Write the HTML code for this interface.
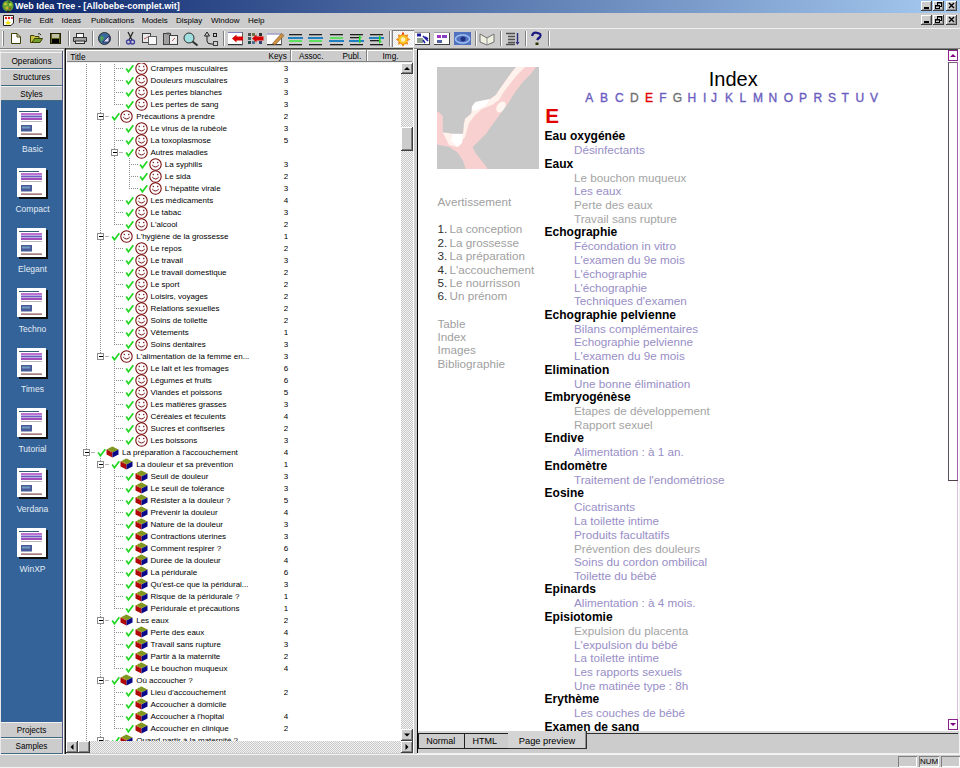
<!DOCTYPE html>
<html><head><meta charset="utf-8"><style>
html,body{margin:0;padding:0;width:960px;height:768px;overflow:hidden;background:#cccccc}
body{position:relative;font-family:"Liberation Sans",sans-serif}
.t{position:absolute;white-space:nowrap;font-family:"Liberation Sans",sans-serif}
svg{overflow:visible}
</style></head><body>
<div style="position:absolute;left:0px;top:0px;width:960px;height:13px;background:linear-gradient(to right,#0a246a 0%,#a6caf0 100%)"></div>
<div class="t" style="left:15.00px;top:2.38px;font-size:9px;line-height:9px;color:#fff;font-weight:bold;">Web Idea Tree - [Allobebe-complet.wit]</div>
<svg style="position:absolute;left:1px;top:0px" width="14" height="13"><circle cx="7" cy="5.8" r="5.6" fill="#60a030"/><circle cx="4.5" cy="4" r="1.6" fill="#c0c040"/><circle cx="9.5" cy="4.5" r="1.5" fill="#b0d040"/><circle cx="6" cy="8" r="1.4" fill="#d0b030"/><circle cx="8" cy="2" r="1" fill="#306020"/><circle cx="9" cy="8.5" r="1" fill="#a04020"/><rect x="6" y="10.5" width="2.5" height="2" fill="#302010"/></svg>
<div style="position:absolute;left:921px;top:1px;width:11px;height:10px;background:#cccccc;box-shadow:inset -1px -1px #404040, inset 1px 1px #fff, inset -2px -2px #909090"></div>
<div style="position:absolute;left:924px;top:7px;width:5px;height:2px;background:#000"></div>
<div style="position:absolute;left:933px;top:1px;width:11px;height:10px;background:#cccccc;box-shadow:inset -1px -1px #404040, inset 1px 1px #fff, inset -2px -2px #909090"></div>
<svg style="position:absolute;left:933px;top:1px" width="11" height="10"><rect x="4.5" y="1.5" width="4" height="4" fill="none" stroke="#000"/><rect x="4" y="1" width="5" height="1.5" fill="#000"/><rect x="2.5" y="4.5" width="4" height="3" fill="#ccc" stroke="#000"/><rect x="2" y="4" width="5" height="1.5" fill="#000"/></svg>
<div style="position:absolute;left:946px;top:1px;width:11px;height:10px;background:#cccccc;box-shadow:inset -1px -1px #404040, inset 1px 1px #fff, inset -2px -2px #909090"></div>
<svg style="position:absolute;left:946px;top:1px" width="11" height="10"><path d="M3 2 L8 7 M8 2 L3 7" stroke="#000" stroke-width="1.4"/></svg>
<div style="position:absolute;left:0px;top:13px;width:960px;height:15px;background:#cccccc"></div>
<div style="position:absolute;left:0px;top:28px;width:960px;height:1px;background:#f0f0f0"></div>
<div style="position:absolute;left:921px;top:15px;width:11px;height:10px;background:#cccccc;box-shadow:inset -1px -1px #404040, inset 1px 1px #fff, inset -2px -2px #909090"></div>
<div style="position:absolute;left:924px;top:21px;width:5px;height:2px;background:#000"></div>
<div style="position:absolute;left:933px;top:15px;width:11px;height:10px;background:#cccccc;box-shadow:inset -1px -1px #404040, inset 1px 1px #fff, inset -2px -2px #909090"></div>
<svg style="position:absolute;left:933px;top:15px" width="11" height="10"><rect x="4.5" y="1.5" width="4" height="4" fill="none" stroke="#000"/><rect x="4" y="1" width="5" height="1.5" fill="#000"/><rect x="2.5" y="4.5" width="4" height="3" fill="#ccc" stroke="#000"/><rect x="2" y="4" width="5" height="1.5" fill="#000"/></svg>
<div style="position:absolute;left:946px;top:15px;width:11px;height:10px;background:#cccccc;box-shadow:inset -1px -1px #404040, inset 1px 1px #fff, inset -2px -2px #909090"></div>
<svg style="position:absolute;left:946px;top:15px" width="11" height="10"><path d="M3 2 L8 7 M8 2 L3 7" stroke="#000" stroke-width="1.4"/></svg>
<svg style="position:absolute;left:3px;top:15px" width="12" height="12"><path d="M0.5 0.5 H10.5 V8 L8 10.5 H0.5 Z" fill="#fff" stroke="#202020"/><circle cx="3" cy="3" r="1.2" fill="#e02020"/><circle cx="6" cy="3" r="1.2" fill="#e02020"/><circle cx="9" cy="3" r="1.1" fill="#c02040"/><path d="M5 5 L6 7 L8 7.3 L6.5 8.5 L7 10 L5 9 L3 10 L3.5 8.5 L2 7.3 L4 7 Z" fill="#f0e000"/></svg>
<div class="t" style="left:18.50px;top:17.03px;font-size:8px;line-height:8px;color:#000;font-weight:normal;">File</div>
<div class="t" style="left:39.50px;top:17.03px;font-size:8px;line-height:8px;color:#000;font-weight:normal;">Edit</div>
<div class="t" style="left:61.50px;top:17.03px;font-size:8px;line-height:8px;color:#000;font-weight:normal;">Ideas</div>
<div class="t" style="left:91.00px;top:17.03px;font-size:8px;line-height:8px;color:#000;font-weight:normal;">Publications</div>
<div class="t" style="left:142.00px;top:17.03px;font-size:8px;line-height:8px;color:#000;font-weight:normal;">Models</div>
<div class="t" style="left:176.00px;top:17.03px;font-size:8px;line-height:8px;color:#000;font-weight:normal;">Display</div>
<div class="t" style="left:211.00px;top:17.03px;font-size:8px;line-height:8px;color:#000;font-weight:normal;">Window</div>
<div class="t" style="left:248.00px;top:17.03px;font-size:8px;line-height:8px;color:#000;font-weight:normal;">Help</div>
<div style="position:absolute;left:0px;top:29px;width:960px;height:19px;background:#cccccc"></div>
<div style="position:absolute;left:0px;top:48px;width:960px;height:1px;background:#808080"></div>
<div style="position:absolute;left:2px;top:31px;width:1px;height:15px;background:#fff"></div>
<div style="position:absolute;left:3px;top:31px;width:1px;height:15px;background:#808080"></div>
<div style="position:absolute;left:68px;top:31px;width:1px;height:15px;background:#808080"></div>
<div style="position:absolute;left:69px;top:31px;width:1px;height:15px;background:#fff"></div>
<div style="position:absolute;left:92px;top:31px;width:1px;height:15px;background:#808080"></div>
<div style="position:absolute;left:93px;top:31px;width:1px;height:15px;background:#fff"></div>
<div style="position:absolute;left:118px;top:31px;width:1px;height:15px;background:#808080"></div>
<div style="position:absolute;left:119px;top:31px;width:1px;height:15px;background:#fff"></div>
<div style="position:absolute;left:223px;top:31px;width:1px;height:15px;background:#808080"></div>
<div style="position:absolute;left:224px;top:31px;width:1px;height:15px;background:#fff"></div>
<div style="position:absolute;left:389px;top:31px;width:1px;height:15px;background:#808080"></div>
<div style="position:absolute;left:390px;top:31px;width:1px;height:15px;background:#fff"></div>
<div style="position:absolute;left:475px;top:31px;width:1px;height:15px;background:#808080"></div>
<div style="position:absolute;left:476px;top:31px;width:1px;height:15px;background:#fff"></div>
<div style="position:absolute;left:500px;top:31px;width:1px;height:15px;background:#808080"></div>
<div style="position:absolute;left:501px;top:31px;width:1px;height:15px;background:#fff"></div>
<div style="position:absolute;left:525px;top:31px;width:1px;height:15px;background:#808080"></div>
<div style="position:absolute;left:526px;top:31px;width:1px;height:15px;background:#fff"></div>
<div style="position:absolute;left:548px;top:31px;width:1px;height:15px;background:#808080"></div>
<div style="position:absolute;left:549px;top:31px;width:1px;height:15px;background:#fff"></div>
<svg style="position:absolute;left:11px;top:33px" width="10" height="11" viewBox="0 0 10 11"><path d="M0.5 0.5 H6 L9.5 4 V10.5 H0.5 Z" fill="#fff" stroke="#404000"/><path d="M6 0.5 V4 H9.5" fill="none" stroke="#404000"/></svg>
<svg style="position:absolute;left:30px;top:33px" width="13" height="11" viewBox="0 0 13 11"><path d="M0.5 2.5 H4 L5 3.5 H9 V9.5 H0.5 Z" fill="#c8c040" stroke="#404000"/><path d="M2 9.5 L4.5 5.5 H12.5 L10 9.5 Z" fill="#70a030" stroke="#404000"/><path d="M8 1 Q10 0 11 2" fill="none" stroke="#202020"/></svg>
<svg style="position:absolute;left:50px;top:33px" width="11" height="11" viewBox="0 0 11 11"><rect x="0.5" y="0.5" width="10" height="10" fill="#606020" stroke="#202000"/><rect x="2" y="1" width="7" height="4" fill="#c0c0a0"/><rect x="2" y="6" width="7" height="4" fill="#000"/></svg>
<svg style="position:absolute;left:73px;top:33px" width="14" height="11" viewBox="0 0 14 11"><rect x="3.5" y="0.5" width="7" height="4" fill="#fff" stroke="#303030"/><path d="M0.5 4.5 H13.5 V8.5 H0.5 Z" fill="#a0a0a0" stroke="#303030"/><rect x="2.5" y="8" width="9" height="2.5" fill="#e0e0e0" stroke="#303030"/></svg>
<svg style="position:absolute;left:98px;top:32px" width="13" height="13" viewBox="0 0 13 13"><circle cx="6.5" cy="6.5" r="6" fill="#3a6a9a" stroke="#303030"/><path d="M2 5 Q5 3 6 6 Q4 9 3 10" fill="#50a050"/><path d="M5 10 L11 4 L11 10 Z" fill="#e0e0f0" stroke="#202060" stroke-width="0.8"/></svg>
<svg style="position:absolute;left:126px;top:32px" width="9" height="13" viewBox="0 0 9 13"><path d="M2 0 L6 8 M7 0 L3 8" stroke="#202020" stroke-width="1.2"/><circle cx="2.5" cy="10" r="2" fill="none" stroke="#4040a0" stroke-width="1.4"/><circle cx="6.5" cy="10" r="2" fill="none" stroke="#4040a0" stroke-width="1.4"/></svg>
<svg style="position:absolute;left:142px;top:33px" width="16" height="12" viewBox="0 0 16 12"><rect x="0.5" y="0.5" width="8" height="9" fill="#e8e8e8" stroke="#404040"/><rect x="6.5" y="3.5" width="8" height="8" fill="#f8f8f8" stroke="#606060"/><path d="M2 6 L6 4" stroke="#c06060"/></svg>
<svg style="position:absolute;left:163px;top:32px" width="16" height="13" viewBox="0 0 16 13"><rect x="0.5" y="1.5" width="7" height="11" fill="#a0a0a0" stroke="#404040"/><rect x="3.5" y="0.5" width="3" height="2" fill="#606060"/><rect x="6.5" y="3.5" width="8" height="9" fill="#f0f0f0" stroke="#404040"/><path d="M9 9 L12 6" stroke="#c06060"/></svg>
<svg style="position:absolute;left:183px;top:32px" width="16" height="14" viewBox="0 0 16 14"><circle cx="6" cy="6" r="5" fill="#a0e0e0" stroke="#303030"/><path d="M9.5 9.5 L14.5 13.5" stroke="#303030" stroke-width="2"/></svg>
<svg style="position:absolute;left:204px;top:32px" width="14" height="14" viewBox="0 0 14 14"><path d="M3 0 L0.5 4 H5.5 Z M3 4 V9 Q3 12 7 12 H10" fill="none" stroke="#202020"/><rect x="9.5" y="1.5" width="3" height="3" fill="none" stroke="#202020"/><rect x="9.5" y="9.5" width="4" height="4" fill="#d0d0d0" stroke="#404040"/></svg>
<svg style="position:absolute;left:228px;top:32px" width="15" height="13" viewBox="0 0 15 13"><rect x="0" y="0" width="15" height="13" fill="#fff"/><rect x="0" y="0" width="15" height="1" fill="#8080c0"/><rect x="0" y="12" width="15" height="1.2" fill="#303030"/><rect x="14" y="0" width="1" height="13" fill="#606060"/><path d="M4 6.5 L8.5 2.5 V4.5 H15 V8.5 H8.5 V10.5 Z" fill="#d80000"/></svg>
<svg style="position:absolute;left:248px;top:32px" width="16" height="13" viewBox="0 0 16 13"><rect x="0" y="1" width="3" height="3" fill="#505050"/><rect x="4" y="1" width="3" height="3" fill="#707040"/><rect x="0" y="9" width="3" height="3" fill="#204848"/><rect x="4" y="9" width="3" height="3" fill="#507090"/><rect x="11" y="1" width="3" height="3" fill="#303030"/><rect x="11" y="9" width="3" height="3" fill="#304070"/><rect x="0" y="5" width="3" height="3" fill="#406060"/><path d="M4 6.5 L8.5 2.5 V4.5 H15.5 V8.5 H8.5 V10.5 Z" fill="#d80000"/></svg>
<svg style="position:absolute;left:267px;top:32px" width="17" height="13" viewBox="0 0 17 13"><rect x="0" y="1.5" width="15" height="11" fill="#fff"/><rect x="0" y="1.5" width="15" height="1" fill="#7070b0"/><rect x="0" y="12" width="15" height="1.2" fill="#303030"/><rect x="14" y="2" width="1" height="11" fill="#606060"/><path d="M5.5 11.5 L14.5 1.5 L17 3.5 L8 13 Z" fill="#d09040" stroke="#705020" stroke-width="0.6"/></svg>
<svg style="position:absolute;left:288px;top:33px" width="15" height="13" viewBox="0 0 15 13"><rect x="1" y="1" width="13" height="1.3" fill="#202020"/><rect x="1" y="11" width="13" height="1.3" fill="#202020"/><rect x="0" y="4" width="15" height="2" fill="#2080c0"/><rect x="1" y="7" width="13" height="2" fill="#60e060"/></svg>
<svg style="position:absolute;left:308px;top:33px" width="15" height="13" viewBox="0 0 15 13"><rect x="1" y="1" width="13" height="1.3" fill="#202020"/><rect x="1" y="11" width="13" height="1.3" fill="#202020"/><rect x="0" y="4" width="15" height="2" fill="#2080c0"/><rect x="1" y="7" width="13" height="2" fill="#60e060"/></svg>
<svg style="position:absolute;left:329px;top:33px" width="15" height="13" viewBox="0 0 15 13"><rect x="1" y="1" width="13" height="1.3" fill="#202020"/><rect x="1" y="11" width="13" height="1.3" fill="#202020"/><rect x="1" y="4" width="13" height="2" fill="#60e060"/><rect x="0" y="7" width="15" height="2" fill="#2080c0"/></svg>
<svg style="position:absolute;left:349px;top:33px" width="15" height="13" viewBox="0 0 15 13"><rect x="1" y="1" width="13" height="1.3" fill="#202020"/><rect x="1" y="11" width="13" height="1.3" fill="#202020"/><rect x="1" y="4" width="10" height="1.3" fill="#202020"/><rect x="0" y="7" width="15" height="2" fill="#2080c0"/><path d="M10 2 L13 5 H11.5 V10 H10 Z" fill="#20e020"/></svg>
<svg style="position:absolute;left:369px;top:33px" width="15" height="13" viewBox="0 0 15 13"><rect x="1" y="1" width="13" height="1.3" fill="#202020"/><rect x="1" y="11" width="13" height="1.3" fill="#202020"/><rect x="0" y="4" width="15" height="2" fill="#2080c0"/><rect x="1" y="7" width="10" height="1.3" fill="#202020"/><path d="M10 11 L13 8 H11.5 V3 H10 Z" fill="#20e020"/></svg>
<div style="position:absolute;left:392px;top:30px;width:22px;height:17px;background:repeating-conic-gradient(#e8e8e8 0 25%,#ffffff 0 50%) 0 0/2px 2px;box-shadow:inset 1px 1px #808080, inset -1px -1px #fff"></div>
<svg style="position:absolute;left:395px;top:32px" width="16" height="15" viewBox="0 0 16 15"><g transform="translate(8 7.5)"><path d="M0.00 -7.20 L1.84 -4.43 L5.09 -5.09 L4.43 -1.84 L7.20 0.00 L4.43 1.84 L5.09 5.09 L1.84 4.43 L0.00 7.20 L-1.84 4.43 L-5.09 5.09 L-4.43 1.84 L-7.20 0.00 L-4.43 -1.84 L-5.09 -5.09 L-1.84 -4.43 Z" fill="#f08a18"/><circle r="4.3" fill="#f8c828"/><circle r="2.2" fill="#fff0c0"/><path d="M-1 -7 L1 -7 L0 -4 Z" fill="#e03010"/></g></svg>
<svg style="position:absolute;left:415px;top:32px" width="15" height="13" viewBox="0 0 15 13"><rect x="0" y="0" width="15" height="13" fill="#fff"/><rect x="0" y="12" width="15" height="1" fill="#404040"/><rect x="14" y="0" width="1" height="13" fill="#404040"/><rect x="0" y="0" width="15" height="1" fill="#a0a0a0"/><rect x="2" y="1.5" width="4" height="3" fill="#2020a0"/><rect x="2" y="6" width="6" height="5" fill="#90a090"/><path d="M8 4 L13 9 M8 8 L10 11 M10 5 L13 7" stroke="#2020a0" stroke-width="1.6"/></svg>
<svg style="position:absolute;left:434px;top:32px" width="16" height="13" viewBox="0 0 16 13"><rect x="0" y="0" width="16" height="13" fill="#fff"/><rect x="0" y="12" width="16" height="1" fill="#404040"/><rect x="15" y="0" width="1" height="13" fill="#404040"/><rect x="0" y="0" width="16" height="1" fill="#a0a0a0"/><rect x="3" y="3" width="4" height="3" fill="#a030c0"/><rect x="8" y="3" width="5" height="3" fill="#8040c0"/><rect x="3" y="8" width="5" height="3" fill="#5060a0"/></svg>
<svg style="position:absolute;left:454px;top:32px" width="17" height="13" viewBox="0 0 17 13"><rect x="0" y="0" width="17" height="13" fill="#5070c0"/><ellipse cx="8.5" cy="7" rx="7" ry="4" fill="none" stroke="#a0c0f0" stroke-width="1.5"/><circle cx="9" cy="7" r="2.5" fill="#203080"/></svg>
<svg style="position:absolute;left:479px;top:33px" width="17" height="12" viewBox="0 0 17 12"><path d="M1 1 L8 5 L15 1 V9 L8 12 L1 9 Z" fill="#f0f0e0" stroke="#707070"/><path d="M8 5 V12" stroke="#909090"/></svg>
<svg style="position:absolute;left:505px;top:32px" width="16" height="14" viewBox="0 0 16 14"><path d="M1 1.5 H10 M3 4.5 H10 M3 7.5 H10 M3 10.5 H10 M1 12.5 H10" stroke="#505050" stroke-width="1.3"/><path d="M12.5 1 V11" stroke="#303080" stroke-width="1.5"/><path d="M10.5 10 L12.5 13 L14.5 10 Z" fill="#303080"/></svg>
<svg style="position:absolute;left:530px;top:32px" width="14" height="14" viewBox="0 0 14 14"><path d="M2 4 Q3 0 7 0.8 Q12 1.5 10 5 Q8 6.5 7 8" fill="none" stroke="#1a1a80" stroke-width="2.2"/><rect x="5.5" y="10.5" width="3" height="2.5" fill="#303000"/></svg>
<div style="position:absolute;left:0px;top:49px;width:960px;height:706px;background:#cccccc"></div>
<div style="position:absolute;left:0px;top:49px;width:960px;height:1px;background:#f4f4f4"></div>
<div style="position:absolute;left:0px;top:51px;width:64px;height:704px;background:#cccccc;box-shadow:inset 1px 0 #e8e8e8, inset -1px -1px #f8f8f8, inset -2px -2px #505a80"></div>
<div style="position:absolute;left:1px;top:52px;width:61px;height:17px;background:#cccccc;box-shadow:inset 0 1px #f0f0f0, inset 0 -1px #406a80"></div>
<div class="t" style="left:1px;width:61px;text-align:center;top:57.86px;font-size:8.2px;line-height:8.2px;color:#000">Operations</div>
<div style="position:absolute;left:1px;top:69px;width:61px;height:17px;background:#cccccc;box-shadow:inset 0 1px #f0f0f0, inset 0 -1px #406a80"></div>
<div class="t" style="left:1px;width:61px;text-align:center;top:74.06px;font-size:8.2px;line-height:8.2px;color:#000">Structures</div>
<div style="position:absolute;left:1px;top:86px;width:61px;height:15px;background:#cccccc;box-shadow:inset 0 1px #f0f0f0, inset 0 -1px #406a80"></div>
<div class="t" style="left:1px;width:61px;text-align:center;top:90.56px;font-size:8.2px;line-height:8.2px;color:#000">Styles</div>
<div style="position:absolute;left:1px;top:101px;width:61px;height:621px;background:#336399"></div>
<div style="position:absolute;left:19px;top:110px;width:29px;height:29px;background:#101010"></div>
<svg style="position:absolute;left:17px;top:108px" width="30" height="30" viewBox="0 0 30 30"><rect width="29" height="29" fill="#fff"/><rect x="2" y="3" width="20" height="1" fill="#306070"/><rect x="4" y="5" width="21" height="2" fill="#c070d0"/><rect x="4" y="7.5" width="21" height="2" fill="#7060c0"/><rect x="4" y="10" width="21" height="2" fill="#a050b8"/><rect x="4" y="13" width="21" height="1" fill="#b8b8b8"/><rect x="4" y="17" width="11" height="6.5" fill="#4a5a98"/><rect x="5" y="18.5" width="8" height="2" fill="#70a0c0"/><rect x="4" y="25.5" width="21" height="1.2" fill="#804848"/></svg>
<div class="t" style="left:1px;width:63px;text-align:center;top:145.20px;font-size:8.5px;line-height:8.5px;color:#e4ecf4">Basic</div>
<div style="position:absolute;left:19px;top:170px;width:29px;height:29px;background:#101010"></div>
<svg style="position:absolute;left:17px;top:168px" width="30" height="30" viewBox="0 0 30 30"><rect width="29" height="29" fill="#fff"/><rect x="2" y="3" width="20" height="1" fill="#306070"/><rect x="4" y="5" width="21" height="2" fill="#c070d0"/><rect x="4" y="7.5" width="21" height="2" fill="#7060c0"/><rect x="4" y="10" width="21" height="2" fill="#a050b8"/><rect x="4" y="13" width="21" height="1" fill="#b8b8b8"/><rect x="4" y="17" width="11" height="6.5" fill="#4a5a98"/><rect x="5" y="18.5" width="8" height="2" fill="#70a0c0"/><rect x="4" y="25.5" width="21" height="1.2" fill="#804848"/></svg>
<div class="t" style="left:1px;width:63px;text-align:center;top:205.20px;font-size:8.5px;line-height:8.5px;color:#e4ecf4">Compact</div>
<div style="position:absolute;left:19px;top:230px;width:29px;height:29px;background:#101010"></div>
<svg style="position:absolute;left:17px;top:228px" width="30" height="30" viewBox="0 0 30 30"><rect width="29" height="29" fill="#fff"/><rect x="2" y="3" width="20" height="1" fill="#306070"/><rect x="4" y="5" width="21" height="2" fill="#c070d0"/><rect x="4" y="7.5" width="21" height="2" fill="#7060c0"/><rect x="4" y="10" width="21" height="2" fill="#a050b8"/><rect x="4" y="13" width="21" height="1" fill="#b8b8b8"/><rect x="4" y="17" width="11" height="6.5" fill="#4a5a98"/><rect x="5" y="18.5" width="8" height="2" fill="#70a0c0"/><rect x="4" y="25.5" width="21" height="1.2" fill="#804848"/></svg>
<div class="t" style="left:1px;width:63px;text-align:center;top:265.20px;font-size:8.5px;line-height:8.5px;color:#e4ecf4">Elegant</div>
<div style="position:absolute;left:19px;top:290px;width:29px;height:29px;background:#101010"></div>
<svg style="position:absolute;left:17px;top:288px" width="30" height="30" viewBox="0 0 30 30"><rect width="29" height="29" fill="#fff"/><rect x="2" y="3" width="20" height="1" fill="#306070"/><rect x="4" y="5" width="21" height="2" fill="#c070d0"/><rect x="4" y="7.5" width="21" height="2" fill="#7060c0"/><rect x="4" y="10" width="21" height="2" fill="#a050b8"/><rect x="4" y="13" width="21" height="1" fill="#b8b8b8"/><rect x="4" y="17" width="11" height="6.5" fill="#4a5a98"/><rect x="5" y="18.5" width="8" height="2" fill="#70a0c0"/><rect x="4" y="25.5" width="21" height="1.2" fill="#804848"/></svg>
<div class="t" style="left:1px;width:63px;text-align:center;top:325.20px;font-size:8.5px;line-height:8.5px;color:#e4ecf4">Techno</div>
<div style="position:absolute;left:19px;top:350px;width:29px;height:29px;background:#101010"></div>
<svg style="position:absolute;left:17px;top:348px" width="30" height="30" viewBox="0 0 30 30"><rect width="29" height="29" fill="#fff"/><rect x="2" y="3" width="20" height="1" fill="#306070"/><rect x="4" y="5" width="21" height="2" fill="#c070d0"/><rect x="4" y="7.5" width="21" height="2" fill="#7060c0"/><rect x="4" y="10" width="21" height="2" fill="#a050b8"/><rect x="4" y="13" width="21" height="1" fill="#b8b8b8"/><rect x="4" y="17" width="11" height="6.5" fill="#4a5a98"/><rect x="5" y="18.5" width="8" height="2" fill="#70a0c0"/><rect x="4" y="25.5" width="21" height="1.2" fill="#804848"/></svg>
<div class="t" style="left:1px;width:63px;text-align:center;top:385.20px;font-size:8.5px;line-height:8.5px;color:#e4ecf4">Times</div>
<div style="position:absolute;left:19px;top:410px;width:29px;height:29px;background:#101010"></div>
<svg style="position:absolute;left:17px;top:408px" width="30" height="30" viewBox="0 0 30 30"><rect width="29" height="29" fill="#fff"/><rect x="2" y="3" width="20" height="1" fill="#306070"/><rect x="4" y="5" width="21" height="2" fill="#c070d0"/><rect x="4" y="7.5" width="21" height="2" fill="#7060c0"/><rect x="4" y="10" width="21" height="2" fill="#a050b8"/><rect x="4" y="13" width="21" height="1" fill="#b8b8b8"/><rect x="4" y="17" width="11" height="6.5" fill="#4a5a98"/><rect x="5" y="18.5" width="8" height="2" fill="#70a0c0"/><rect x="4" y="25.5" width="21" height="1.2" fill="#804848"/></svg>
<div class="t" style="left:1px;width:63px;text-align:center;top:445.20px;font-size:8.5px;line-height:8.5px;color:#e4ecf4">Tutorial</div>
<div style="position:absolute;left:19px;top:470px;width:29px;height:29px;background:#101010"></div>
<svg style="position:absolute;left:17px;top:468px" width="30" height="30" viewBox="0 0 30 30"><rect width="29" height="29" fill="#fff"/><rect x="2" y="3" width="20" height="1" fill="#306070"/><rect x="4" y="5" width="21" height="2" fill="#c070d0"/><rect x="4" y="7.5" width="21" height="2" fill="#7060c0"/><rect x="4" y="10" width="21" height="2" fill="#a050b8"/><rect x="4" y="13" width="21" height="1" fill="#b8b8b8"/><rect x="4" y="17" width="11" height="6.5" fill="#4a5a98"/><rect x="5" y="18.5" width="8" height="2" fill="#70a0c0"/><rect x="4" y="25.5" width="21" height="1.2" fill="#804848"/></svg>
<div class="t" style="left:1px;width:63px;text-align:center;top:505.20px;font-size:8.5px;line-height:8.5px;color:#e4ecf4">Verdana</div>
<div style="position:absolute;left:19px;top:530px;width:29px;height:29px;background:#101010"></div>
<svg style="position:absolute;left:17px;top:528px" width="30" height="30" viewBox="0 0 30 30"><rect width="29" height="29" fill="#fff"/><rect x="2" y="3" width="20" height="1" fill="#306070"/><rect x="4" y="5" width="21" height="2" fill="#c070d0"/><rect x="4" y="7.5" width="21" height="2" fill="#7060c0"/><rect x="4" y="10" width="21" height="2" fill="#a050b8"/><rect x="4" y="13" width="21" height="1" fill="#b8b8b8"/><rect x="4" y="17" width="11" height="6.5" fill="#4a5a98"/><rect x="5" y="18.5" width="8" height="2" fill="#70a0c0"/><rect x="4" y="25.5" width="21" height="1.2" fill="#804848"/></svg>
<div class="t" style="left:1px;width:63px;text-align:center;top:565.20px;font-size:8.5px;line-height:8.5px;color:#e4ecf4">WinXP</div>
<div style="position:absolute;left:1px;top:722px;width:61px;height:16px;background:#cccccc;box-shadow:inset 0 1px #f0f0f0, inset 0 -1px #406a80"></div>
<div class="t" style="left:1px;width:61px;text-align:center;top:727.06px;font-size:8.2px;line-height:8.2px;color:#000">Projects</div>
<div style="position:absolute;left:1px;top:738px;width:61px;height:16px;background:#cccccc;box-shadow:inset 0 1px #f0f0f0, inset 0 -1px #406a80"></div>
<div class="t" style="left:1px;width:61px;text-align:center;top:743.06px;font-size:8.2px;line-height:8.2px;color:#000">Samples</div>
<div style="position:absolute;left:64px;top:48px;width:350px;height:707px;background:#cccccc;box-shadow:inset -1px -1px #fff"></div>
<div style="position:absolute;left:64px;top:48px;width:349px;height:1px;background:#454545"></div>
<div style="position:absolute;left:64px;top:49px;width:349px;height:1px;background:#8a8a7c"></div>
<div style="position:absolute;left:64px;top:48px;width:1px;height:706px;background:#808080"></div>
<div style="position:absolute;left:65px;top:48px;width:1px;height:706px;background:#101010"></div>
<div style="position:absolute;left:66px;top:50px;width:346px;height:12px;background:#cccccc;box-shadow:inset 1px 1px #fff, inset 0 -1px #808080"></div>
<div style="position:absolute;left:66px;top:62px;width:346px;height:1px;background:#f0f0f0"></div>
<div class="t" style="left:70.30px;top:53.76px;font-size:8.2px;line-height:8.2px;color:#000;font-weight:normal;">Title</div>
<div class="t" style="left:206.8px;width:80px;text-align:right;top:53.26px;font-size:8.2px;line-height:8.2px">Keys</div>
<div class="t" style="left:243.5px;width:80px;text-align:right;top:53.26px;font-size:8.2px;line-height:8.2px">Assoc.</div>
<div class="t" style="left:281.2px;width:80px;text-align:right;top:53.26px;font-size:8.2px;line-height:8.2px">Publ.</div>
<div class="t" style="left:318.5px;width:80px;text-align:right;top:53.26px;font-size:8.2px;line-height:8.2px">Img.</div>
<div style="position:absolute;left:290px;top:50px;width:1px;height:11px;background:#808080"></div>
<div style="position:absolute;left:291px;top:50px;width:1px;height:11px;background:#fff"></div>
<div style="position:absolute;left:366px;top:50px;width:1px;height:11px;background:#808080"></div>
<div style="position:absolute;left:367px;top:50px;width:1px;height:11px;background:#fff"></div>
<div style="position:absolute;left:66px;top:63px;width:335px;height:678px;background:#fff"></div>
<div style="position:absolute;left:66px;top:63px;width:335px;height:678px;overflow:hidden">
<div style="position:absolute;left:48px;top:-23px;width:1px;height:28px;background:repeating-linear-gradient(to bottom,#909090 0 1px,transparent 1px 2px)"></div>
<div style="position:absolute;left:48px;top:5px;width:1px;height:12px;background:repeating-linear-gradient(to bottom,#909090 0 1px,transparent 1px 2px)"></div>
<div style="position:absolute;left:48px;top:17px;width:1px;height:12px;background:repeating-linear-gradient(to bottom,#909090 0 1px,transparent 1px 2px)"></div>
<div style="position:absolute;left:48px;top:29px;width:1px;height:12px;background:repeating-linear-gradient(to bottom,#909090 0 1px,transparent 1px 2px)"></div>
<div style="position:absolute;left:34px;top:-23px;width:1px;height:76px;background:repeating-linear-gradient(to bottom,#909090 0 1px,transparent 1px 2px)"></div>
<div style="position:absolute;left:48px;top:59px;width:1px;height:6px;background:repeating-linear-gradient(to bottom,#909090 0 1px,transparent 1px 2px)"></div>
<div style="position:absolute;left:48px;top:65px;width:1px;height:12px;background:repeating-linear-gradient(to bottom,#909090 0 1px,transparent 1px 2px)"></div>
<div style="position:absolute;left:48px;top:77px;width:1px;height:12px;background:repeating-linear-gradient(to bottom,#909090 0 1px,transparent 1px 2px)"></div>
<div style="position:absolute;left:63px;top:95px;width:1px;height:6px;background:repeating-linear-gradient(to bottom,#909090 0 1px,transparent 1px 2px)"></div>
<div style="position:absolute;left:63px;top:101px;width:1px;height:12px;background:repeating-linear-gradient(to bottom,#909090 0 1px,transparent 1px 2px)"></div>
<div style="position:absolute;left:63px;top:113px;width:1px;height:12px;background:repeating-linear-gradient(to bottom,#909090 0 1px,transparent 1px 2px)"></div>
<div style="position:absolute;left:48px;top:89px;width:1px;height:48px;background:repeating-linear-gradient(to bottom,#909090 0 1px,transparent 1px 2px)"></div>
<div style="position:absolute;left:48px;top:137px;width:1px;height:12px;background:repeating-linear-gradient(to bottom,#909090 0 1px,transparent 1px 2px)"></div>
<div style="position:absolute;left:48px;top:149px;width:1px;height:12px;background:repeating-linear-gradient(to bottom,#909090 0 1px,transparent 1px 2px)"></div>
<div style="position:absolute;left:34px;top:53px;width:1px;height:120px;background:repeating-linear-gradient(to bottom,#909090 0 1px,transparent 1px 2px)"></div>
<div style="position:absolute;left:48px;top:179px;width:1px;height:6px;background:repeating-linear-gradient(to bottom,#909090 0 1px,transparent 1px 2px)"></div>
<div style="position:absolute;left:48px;top:185px;width:1px;height:12px;background:repeating-linear-gradient(to bottom,#909090 0 1px,transparent 1px 2px)"></div>
<div style="position:absolute;left:48px;top:197px;width:1px;height:12px;background:repeating-linear-gradient(to bottom,#909090 0 1px,transparent 1px 2px)"></div>
<div style="position:absolute;left:48px;top:209px;width:1px;height:12px;background:repeating-linear-gradient(to bottom,#909090 0 1px,transparent 1px 2px)"></div>
<div style="position:absolute;left:48px;top:221px;width:1px;height:12px;background:repeating-linear-gradient(to bottom,#909090 0 1px,transparent 1px 2px)"></div>
<div style="position:absolute;left:48px;top:233px;width:1px;height:12px;background:repeating-linear-gradient(to bottom,#909090 0 1px,transparent 1px 2px)"></div>
<div style="position:absolute;left:48px;top:245px;width:1px;height:12px;background:repeating-linear-gradient(to bottom,#909090 0 1px,transparent 1px 2px)"></div>
<div style="position:absolute;left:48px;top:257px;width:1px;height:12px;background:repeating-linear-gradient(to bottom,#909090 0 1px,transparent 1px 2px)"></div>
<div style="position:absolute;left:48px;top:269px;width:1px;height:12px;background:repeating-linear-gradient(to bottom,#909090 0 1px,transparent 1px 2px)"></div>
<div style="position:absolute;left:34px;top:173px;width:1px;height:120px;background:repeating-linear-gradient(to bottom,#909090 0 1px,transparent 1px 2px)"></div>
<div style="position:absolute;left:48px;top:299px;width:1px;height:6px;background:repeating-linear-gradient(to bottom,#909090 0 1px,transparent 1px 2px)"></div>
<div style="position:absolute;left:48px;top:305px;width:1px;height:12px;background:repeating-linear-gradient(to bottom,#909090 0 1px,transparent 1px 2px)"></div>
<div style="position:absolute;left:48px;top:317px;width:1px;height:12px;background:repeating-linear-gradient(to bottom,#909090 0 1px,transparent 1px 2px)"></div>
<div style="position:absolute;left:48px;top:329px;width:1px;height:12px;background:repeating-linear-gradient(to bottom,#909090 0 1px,transparent 1px 2px)"></div>
<div style="position:absolute;left:48px;top:341px;width:1px;height:12px;background:repeating-linear-gradient(to bottom,#909090 0 1px,transparent 1px 2px)"></div>
<div style="position:absolute;left:48px;top:353px;width:1px;height:12px;background:repeating-linear-gradient(to bottom,#909090 0 1px,transparent 1px 2px)"></div>
<div style="position:absolute;left:48px;top:365px;width:1px;height:12px;background:repeating-linear-gradient(to bottom,#909090 0 1px,transparent 1px 2px)"></div>
<div style="position:absolute;left:20px;top:-23px;width:1px;height:412px;background:repeating-linear-gradient(to bottom,#909090 0 1px,transparent 1px 2px)"></div>
<div style="position:absolute;left:34px;top:395px;width:1px;height:6px;background:repeating-linear-gradient(to bottom,#909090 0 1px,transparent 1px 2px)"></div>
<div style="position:absolute;left:48px;top:407px;width:1px;height:6px;background:repeating-linear-gradient(to bottom,#909090 0 1px,transparent 1px 2px)"></div>
<div style="position:absolute;left:48px;top:413px;width:1px;height:12px;background:repeating-linear-gradient(to bottom,#909090 0 1px,transparent 1px 2px)"></div>
<div style="position:absolute;left:48px;top:425px;width:1px;height:12px;background:repeating-linear-gradient(to bottom,#909090 0 1px,transparent 1px 2px)"></div>
<div style="position:absolute;left:48px;top:437px;width:1px;height:12px;background:repeating-linear-gradient(to bottom,#909090 0 1px,transparent 1px 2px)"></div>
<div style="position:absolute;left:48px;top:449px;width:1px;height:12px;background:repeating-linear-gradient(to bottom,#909090 0 1px,transparent 1px 2px)"></div>
<div style="position:absolute;left:48px;top:461px;width:1px;height:12px;background:repeating-linear-gradient(to bottom,#909090 0 1px,transparent 1px 2px)"></div>
<div style="position:absolute;left:48px;top:473px;width:1px;height:12px;background:repeating-linear-gradient(to bottom,#909090 0 1px,transparent 1px 2px)"></div>
<div style="position:absolute;left:48px;top:485px;width:1px;height:12px;background:repeating-linear-gradient(to bottom,#909090 0 1px,transparent 1px 2px)"></div>
<div style="position:absolute;left:48px;top:497px;width:1px;height:12px;background:repeating-linear-gradient(to bottom,#909090 0 1px,transparent 1px 2px)"></div>
<div style="position:absolute;left:48px;top:509px;width:1px;height:12px;background:repeating-linear-gradient(to bottom,#909090 0 1px,transparent 1px 2px)"></div>
<div style="position:absolute;left:48px;top:521px;width:1px;height:12px;background:repeating-linear-gradient(to bottom,#909090 0 1px,transparent 1px 2px)"></div>
<div style="position:absolute;left:48px;top:533px;width:1px;height:12px;background:repeating-linear-gradient(to bottom,#909090 0 1px,transparent 1px 2px)"></div>
<div style="position:absolute;left:34px;top:401px;width:1px;height:156px;background:repeating-linear-gradient(to bottom,#909090 0 1px,transparent 1px 2px)"></div>
<div style="position:absolute;left:48px;top:563px;width:1px;height:6px;background:repeating-linear-gradient(to bottom,#909090 0 1px,transparent 1px 2px)"></div>
<div style="position:absolute;left:48px;top:569px;width:1px;height:12px;background:repeating-linear-gradient(to bottom,#909090 0 1px,transparent 1px 2px)"></div>
<div style="position:absolute;left:48px;top:581px;width:1px;height:12px;background:repeating-linear-gradient(to bottom,#909090 0 1px,transparent 1px 2px)"></div>
<div style="position:absolute;left:48px;top:593px;width:1px;height:12px;background:repeating-linear-gradient(to bottom,#909090 0 1px,transparent 1px 2px)"></div>
<div style="position:absolute;left:34px;top:557px;width:1px;height:60px;background:repeating-linear-gradient(to bottom,#909090 0 1px,transparent 1px 2px)"></div>
<div style="position:absolute;left:48px;top:623px;width:1px;height:6px;background:repeating-linear-gradient(to bottom,#909090 0 1px,transparent 1px 2px)"></div>
<div style="position:absolute;left:48px;top:629px;width:1px;height:12px;background:repeating-linear-gradient(to bottom,#909090 0 1px,transparent 1px 2px)"></div>
<div style="position:absolute;left:48px;top:641px;width:1px;height:12px;background:repeating-linear-gradient(to bottom,#909090 0 1px,transparent 1px 2px)"></div>
<div style="position:absolute;left:48px;top:653px;width:1px;height:12px;background:repeating-linear-gradient(to bottom,#909090 0 1px,transparent 1px 2px)"></div>
<div style="position:absolute;left:34px;top:617px;width:1px;height:60px;background:repeating-linear-gradient(to bottom,#909090 0 1px,transparent 1px 2px)"></div>
<div style="position:absolute;left:20px;top:-23px;width:1px;height:720px;background:repeating-linear-gradient(to bottom,#909090 0 1px,transparent 1px 2px)"></div>
<div style="position:absolute;left:34px;top:677px;width:1px;height:20px;background:repeating-linear-gradient(to bottom,#909090 0 1px,transparent 1px 2px)"></div>
<div style="position:absolute;left:48px;top:5px;width:10px;height:1px;background:repeating-linear-gradient(to right,#909090 0 1px,transparent 1px 2px)"></div>
<svg style="position:absolute;left:59.00px;top:1px" width="9" height="9"><path d="M1.2 4.6 L3.4 7.8 L8.3 1.2" fill="none" stroke="#22d822" stroke-width="1.7"/></svg>
<svg style="position:absolute;left:68.5px;top:-1.5px" width="13" height="13"><circle cx="6.5" cy="6.5" r="5.7" fill="none" stroke="#780808" stroke-width="1.05"/><rect x="3.7" y="3.8" width="1.1" height="1.4" fill="#600"/><rect x="8.2" y="3.8" width="1.1" height="1.4" fill="#600"/><path d="M3.2 7 Q6.5 11 9.8 7" fill="none" stroke="#700808" stroke-width="0.95"/></svg>
<div class="t" style="left:84.5px;top:2.23px;font-size:8px;line-height:8px">Crampes musculaires</div>
<div class="t" style="left:202.3px;width:20px;text-align:right;top:2.23px;font-size:8px;line-height:8px">3</div>
<div style="position:absolute;left:48px;top:17px;width:10px;height:1px;background:repeating-linear-gradient(to right,#909090 0 1px,transparent 1px 2px)"></div>
<svg style="position:absolute;left:59.00px;top:13px" width="9" height="9"><path d="M1.2 4.6 L3.4 7.8 L8.3 1.2" fill="none" stroke="#22d822" stroke-width="1.7"/></svg>
<svg style="position:absolute;left:68.5px;top:10.5px" width="13" height="13"><circle cx="6.5" cy="6.5" r="5.7" fill="none" stroke="#780808" stroke-width="1.05"/><rect x="3.7" y="3.8" width="1.1" height="1.4" fill="#600"/><rect x="8.2" y="3.8" width="1.1" height="1.4" fill="#600"/><path d="M3.2 7 Q6.5 11 9.8 7" fill="none" stroke="#700808" stroke-width="0.95"/></svg>
<div class="t" style="left:84.5px;top:14.23px;font-size:8px;line-height:8px">Douleurs musculaires</div>
<div class="t" style="left:202.3px;width:20px;text-align:right;top:14.23px;font-size:8px;line-height:8px">3</div>
<div style="position:absolute;left:48px;top:29px;width:10px;height:1px;background:repeating-linear-gradient(to right,#909090 0 1px,transparent 1px 2px)"></div>
<svg style="position:absolute;left:59.00px;top:25px" width="9" height="9"><path d="M1.2 4.6 L3.4 7.8 L8.3 1.2" fill="none" stroke="#22d822" stroke-width="1.7"/></svg>
<svg style="position:absolute;left:68.5px;top:22.5px" width="13" height="13"><circle cx="6.5" cy="6.5" r="5.7" fill="none" stroke="#780808" stroke-width="1.05"/><rect x="3.7" y="3.8" width="1.1" height="1.4" fill="#600"/><rect x="8.2" y="3.8" width="1.1" height="1.4" fill="#600"/><path d="M3.2 7 Q6.5 11 9.8 7" fill="none" stroke="#700808" stroke-width="0.95"/></svg>
<div class="t" style="left:84.5px;top:26.23px;font-size:8px;line-height:8px">Les pertes blanches</div>
<div class="t" style="left:202.3px;width:20px;text-align:right;top:26.23px;font-size:8px;line-height:8px">3</div>
<div style="position:absolute;left:48px;top:41px;width:10px;height:1px;background:repeating-linear-gradient(to right,#909090 0 1px,transparent 1px 2px)"></div>
<svg style="position:absolute;left:59.00px;top:37px" width="9" height="9"><path d="M1.2 4.6 L3.4 7.8 L8.3 1.2" fill="none" stroke="#22d822" stroke-width="1.7"/></svg>
<svg style="position:absolute;left:68.5px;top:34.5px" width="13" height="13"><circle cx="6.5" cy="6.5" r="5.7" fill="none" stroke="#780808" stroke-width="1.05"/><rect x="3.7" y="3.8" width="1.1" height="1.4" fill="#600"/><rect x="8.2" y="3.8" width="1.1" height="1.4" fill="#600"/><path d="M3.2 7 Q6.5 11 9.8 7" fill="none" stroke="#700808" stroke-width="0.95"/></svg>
<div class="t" style="left:84.5px;top:38.23px;font-size:8px;line-height:8px">Les pertes de sang</div>
<div class="t" style="left:202.3px;width:20px;text-align:right;top:38.23px;font-size:8px;line-height:8px">3</div>
<div style="position:absolute;left:31px;top:50px;width:5px;height:5px;background:#fff;border:1px solid #8c8c8c"></div><div style="position:absolute;left:33px;top:53px;width:4px;height:1px;background:#000"></div>
<div style="position:absolute;left:39px;top:53px;width:4px;height:1px;background:#b4b4b4"></div>
<svg style="position:absolute;left:44.75px;top:49px" width="9" height="9"><path d="M1.2 4.6 L3.4 7.8 L8.3 1.2" fill="none" stroke="#22d822" stroke-width="1.7"/></svg>
<svg style="position:absolute;left:54.2px;top:46.5px" width="13" height="13"><circle cx="6.5" cy="6.5" r="5.7" fill="none" stroke="#780808" stroke-width="1.05"/><rect x="3.7" y="3.8" width="1.1" height="1.4" fill="#600"/><rect x="8.2" y="3.8" width="1.1" height="1.4" fill="#600"/><path d="M3.2 7 Q6.5 11 9.8 7" fill="none" stroke="#700808" stroke-width="0.95"/></svg>
<div class="t" style="left:70.2px;top:50.23px;font-size:8px;line-height:8px">Précautions à prendre</div>
<div class="t" style="left:202.3px;width:20px;text-align:right;top:50.23px;font-size:8px;line-height:8px">2</div>
<div style="position:absolute;left:48px;top:65px;width:10px;height:1px;background:repeating-linear-gradient(to right,#909090 0 1px,transparent 1px 2px)"></div>
<svg style="position:absolute;left:59.00px;top:61px" width="9" height="9"><path d="M1.2 4.6 L3.4 7.8 L8.3 1.2" fill="none" stroke="#22d822" stroke-width="1.7"/></svg>
<svg style="position:absolute;left:68.5px;top:58.5px" width="13" height="13"><circle cx="6.5" cy="6.5" r="5.7" fill="none" stroke="#780808" stroke-width="1.05"/><rect x="3.7" y="3.8" width="1.1" height="1.4" fill="#600"/><rect x="8.2" y="3.8" width="1.1" height="1.4" fill="#600"/><path d="M3.2 7 Q6.5 11 9.8 7" fill="none" stroke="#700808" stroke-width="0.95"/></svg>
<div class="t" style="left:84.5px;top:62.23px;font-size:8px;line-height:8px">Le virus de la rubéole</div>
<div class="t" style="left:202.3px;width:20px;text-align:right;top:62.23px;font-size:8px;line-height:8px">3</div>
<div style="position:absolute;left:48px;top:77px;width:10px;height:1px;background:repeating-linear-gradient(to right,#909090 0 1px,transparent 1px 2px)"></div>
<svg style="position:absolute;left:59.00px;top:73px" width="9" height="9"><path d="M1.2 4.6 L3.4 7.8 L8.3 1.2" fill="none" stroke="#22d822" stroke-width="1.7"/></svg>
<svg style="position:absolute;left:68.5px;top:70.5px" width="13" height="13"><circle cx="6.5" cy="6.5" r="5.7" fill="none" stroke="#780808" stroke-width="1.05"/><rect x="3.7" y="3.8" width="1.1" height="1.4" fill="#600"/><rect x="8.2" y="3.8" width="1.1" height="1.4" fill="#600"/><path d="M3.2 7 Q6.5 11 9.8 7" fill="none" stroke="#700808" stroke-width="0.95"/></svg>
<div class="t" style="left:84.5px;top:74.23px;font-size:8px;line-height:8px">La toxoplasmose</div>
<div class="t" style="left:202.3px;width:20px;text-align:right;top:74.23px;font-size:8px;line-height:8px">5</div>
<div style="position:absolute;left:45px;top:86px;width:5px;height:5px;background:#fff;border:1px solid #8c8c8c"></div><div style="position:absolute;left:47px;top:89px;width:4px;height:1px;background:#000"></div>
<div style="position:absolute;left:53px;top:89px;width:4px;height:1px;background:#b4b4b4"></div>
<svg style="position:absolute;left:59.00px;top:85px" width="9" height="9"><path d="M1.2 4.6 L3.4 7.8 L8.3 1.2" fill="none" stroke="#22d822" stroke-width="1.7"/></svg>
<svg style="position:absolute;left:68.5px;top:82.5px" width="13" height="13"><circle cx="6.5" cy="6.5" r="5.7" fill="none" stroke="#780808" stroke-width="1.05"/><rect x="3.7" y="3.8" width="1.1" height="1.4" fill="#600"/><rect x="8.2" y="3.8" width="1.1" height="1.4" fill="#600"/><path d="M3.2 7 Q6.5 11 9.8 7" fill="none" stroke="#700808" stroke-width="0.95"/></svg>
<div class="t" style="left:84.5px;top:86.23px;font-size:8px;line-height:8px">Autres maladies</div>
<div style="position:absolute;left:63px;top:101px;width:10px;height:1px;background:repeating-linear-gradient(to right,#909090 0 1px,transparent 1px 2px)"></div>
<svg style="position:absolute;left:73.25px;top:97px" width="9" height="9"><path d="M1.2 4.6 L3.4 7.8 L8.3 1.2" fill="none" stroke="#22d822" stroke-width="1.7"/></svg>
<svg style="position:absolute;left:82.8px;top:94.5px" width="13" height="13"><circle cx="6.5" cy="6.5" r="5.7" fill="none" stroke="#780808" stroke-width="1.05"/><rect x="3.7" y="3.8" width="1.1" height="1.4" fill="#600"/><rect x="8.2" y="3.8" width="1.1" height="1.4" fill="#600"/><path d="M3.2 7 Q6.5 11 9.8 7" fill="none" stroke="#700808" stroke-width="0.95"/></svg>
<div class="t" style="left:98.8px;top:98.23px;font-size:8px;line-height:8px">La syphilis</div>
<div class="t" style="left:202.3px;width:20px;text-align:right;top:98.23px;font-size:8px;line-height:8px">3</div>
<div style="position:absolute;left:63px;top:113px;width:10px;height:1px;background:repeating-linear-gradient(to right,#909090 0 1px,transparent 1px 2px)"></div>
<svg style="position:absolute;left:73.25px;top:109px" width="9" height="9"><path d="M1.2 4.6 L3.4 7.8 L8.3 1.2" fill="none" stroke="#22d822" stroke-width="1.7"/></svg>
<svg style="position:absolute;left:82.8px;top:106.5px" width="13" height="13"><circle cx="6.5" cy="6.5" r="5.7" fill="none" stroke="#780808" stroke-width="1.05"/><rect x="3.7" y="3.8" width="1.1" height="1.4" fill="#600"/><rect x="8.2" y="3.8" width="1.1" height="1.4" fill="#600"/><path d="M3.2 7 Q6.5 11 9.8 7" fill="none" stroke="#700808" stroke-width="0.95"/></svg>
<div class="t" style="left:98.8px;top:110.23px;font-size:8px;line-height:8px">Le sida</div>
<div class="t" style="left:202.3px;width:20px;text-align:right;top:110.23px;font-size:8px;line-height:8px">2</div>
<div style="position:absolute;left:63px;top:125px;width:10px;height:1px;background:repeating-linear-gradient(to right,#909090 0 1px,transparent 1px 2px)"></div>
<svg style="position:absolute;left:73.25px;top:121px" width="9" height="9"><path d="M1.2 4.6 L3.4 7.8 L8.3 1.2" fill="none" stroke="#22d822" stroke-width="1.7"/></svg>
<svg style="position:absolute;left:82.8px;top:118.5px" width="13" height="13"><circle cx="6.5" cy="6.5" r="5.7" fill="none" stroke="#780808" stroke-width="1.05"/><rect x="3.7" y="3.8" width="1.1" height="1.4" fill="#600"/><rect x="8.2" y="3.8" width="1.1" height="1.4" fill="#600"/><path d="M3.2 7 Q6.5 11 9.8 7" fill="none" stroke="#700808" stroke-width="0.95"/></svg>
<div class="t" style="left:98.8px;top:122.23px;font-size:8px;line-height:8px">L&#x27;hépatite virale</div>
<div class="t" style="left:202.3px;width:20px;text-align:right;top:122.23px;font-size:8px;line-height:8px">3</div>
<div style="position:absolute;left:48px;top:137px;width:10px;height:1px;background:repeating-linear-gradient(to right,#909090 0 1px,transparent 1px 2px)"></div>
<svg style="position:absolute;left:59.00px;top:133px" width="9" height="9"><path d="M1.2 4.6 L3.4 7.8 L8.3 1.2" fill="none" stroke="#22d822" stroke-width="1.7"/></svg>
<svg style="position:absolute;left:68.5px;top:130.5px" width="13" height="13"><circle cx="6.5" cy="6.5" r="5.7" fill="none" stroke="#780808" stroke-width="1.05"/><rect x="3.7" y="3.8" width="1.1" height="1.4" fill="#600"/><rect x="8.2" y="3.8" width="1.1" height="1.4" fill="#600"/><path d="M3.2 7 Q6.5 11 9.8 7" fill="none" stroke="#700808" stroke-width="0.95"/></svg>
<div class="t" style="left:84.5px;top:134.23px;font-size:8px;line-height:8px">Les médicaments</div>
<div class="t" style="left:202.3px;width:20px;text-align:right;top:134.23px;font-size:8px;line-height:8px">4</div>
<div style="position:absolute;left:48px;top:149px;width:10px;height:1px;background:repeating-linear-gradient(to right,#909090 0 1px,transparent 1px 2px)"></div>
<svg style="position:absolute;left:59.00px;top:145px" width="9" height="9"><path d="M1.2 4.6 L3.4 7.8 L8.3 1.2" fill="none" stroke="#22d822" stroke-width="1.7"/></svg>
<svg style="position:absolute;left:68.5px;top:142.5px" width="13" height="13"><circle cx="6.5" cy="6.5" r="5.7" fill="none" stroke="#780808" stroke-width="1.05"/><rect x="3.7" y="3.8" width="1.1" height="1.4" fill="#600"/><rect x="8.2" y="3.8" width="1.1" height="1.4" fill="#600"/><path d="M3.2 7 Q6.5 11 9.8 7" fill="none" stroke="#700808" stroke-width="0.95"/></svg>
<div class="t" style="left:84.5px;top:146.23px;font-size:8px;line-height:8px">Le tabac</div>
<div class="t" style="left:202.3px;width:20px;text-align:right;top:146.23px;font-size:8px;line-height:8px">3</div>
<div style="position:absolute;left:48px;top:161px;width:10px;height:1px;background:repeating-linear-gradient(to right,#909090 0 1px,transparent 1px 2px)"></div>
<svg style="position:absolute;left:59.00px;top:157px" width="9" height="9"><path d="M1.2 4.6 L3.4 7.8 L8.3 1.2" fill="none" stroke="#22d822" stroke-width="1.7"/></svg>
<svg style="position:absolute;left:68.5px;top:154.5px" width="13" height="13"><circle cx="6.5" cy="6.5" r="5.7" fill="none" stroke="#780808" stroke-width="1.05"/><rect x="3.7" y="3.8" width="1.1" height="1.4" fill="#600"/><rect x="8.2" y="3.8" width="1.1" height="1.4" fill="#600"/><path d="M3.2 7 Q6.5 11 9.8 7" fill="none" stroke="#700808" stroke-width="0.95"/></svg>
<div class="t" style="left:84.5px;top:158.23px;font-size:8px;line-height:8px">L&#x27;alcool</div>
<div class="t" style="left:202.3px;width:20px;text-align:right;top:158.23px;font-size:8px;line-height:8px">2</div>
<div style="position:absolute;left:31px;top:170px;width:5px;height:5px;background:#fff;border:1px solid #8c8c8c"></div><div style="position:absolute;left:33px;top:173px;width:4px;height:1px;background:#000"></div>
<div style="position:absolute;left:39px;top:173px;width:4px;height:1px;background:#b4b4b4"></div>
<svg style="position:absolute;left:44.75px;top:169px" width="9" height="9"><path d="M1.2 4.6 L3.4 7.8 L8.3 1.2" fill="none" stroke="#22d822" stroke-width="1.7"/></svg>
<svg style="position:absolute;left:54.2px;top:166.5px" width="13" height="13"><circle cx="6.5" cy="6.5" r="5.7" fill="none" stroke="#780808" stroke-width="1.05"/><rect x="3.7" y="3.8" width="1.1" height="1.4" fill="#600"/><rect x="8.2" y="3.8" width="1.1" height="1.4" fill="#600"/><path d="M3.2 7 Q6.5 11 9.8 7" fill="none" stroke="#700808" stroke-width="0.95"/></svg>
<div class="t" style="left:70.2px;top:170.23px;font-size:8px;line-height:8px">L&#x27;hygiène de la grossesse</div>
<div class="t" style="left:202.3px;width:20px;text-align:right;top:170.23px;font-size:8px;line-height:8px">1</div>
<div style="position:absolute;left:48px;top:185px;width:10px;height:1px;background:repeating-linear-gradient(to right,#909090 0 1px,transparent 1px 2px)"></div>
<svg style="position:absolute;left:59.00px;top:181px" width="9" height="9"><path d="M1.2 4.6 L3.4 7.8 L8.3 1.2" fill="none" stroke="#22d822" stroke-width="1.7"/></svg>
<svg style="position:absolute;left:68.5px;top:178.5px" width="13" height="13"><circle cx="6.5" cy="6.5" r="5.7" fill="none" stroke="#780808" stroke-width="1.05"/><rect x="3.7" y="3.8" width="1.1" height="1.4" fill="#600"/><rect x="8.2" y="3.8" width="1.1" height="1.4" fill="#600"/><path d="M3.2 7 Q6.5 11 9.8 7" fill="none" stroke="#700808" stroke-width="0.95"/></svg>
<div class="t" style="left:84.5px;top:182.23px;font-size:8px;line-height:8px">Le repos</div>
<div class="t" style="left:202.3px;width:20px;text-align:right;top:182.23px;font-size:8px;line-height:8px">2</div>
<div style="position:absolute;left:48px;top:197px;width:10px;height:1px;background:repeating-linear-gradient(to right,#909090 0 1px,transparent 1px 2px)"></div>
<svg style="position:absolute;left:59.00px;top:193px" width="9" height="9"><path d="M1.2 4.6 L3.4 7.8 L8.3 1.2" fill="none" stroke="#22d822" stroke-width="1.7"/></svg>
<svg style="position:absolute;left:68.5px;top:190.5px" width="13" height="13"><circle cx="6.5" cy="6.5" r="5.7" fill="none" stroke="#780808" stroke-width="1.05"/><rect x="3.7" y="3.8" width="1.1" height="1.4" fill="#600"/><rect x="8.2" y="3.8" width="1.1" height="1.4" fill="#600"/><path d="M3.2 7 Q6.5 11 9.8 7" fill="none" stroke="#700808" stroke-width="0.95"/></svg>
<div class="t" style="left:84.5px;top:194.23px;font-size:8px;line-height:8px">Le travail</div>
<div class="t" style="left:202.3px;width:20px;text-align:right;top:194.23px;font-size:8px;line-height:8px">3</div>
<div style="position:absolute;left:48px;top:209px;width:10px;height:1px;background:repeating-linear-gradient(to right,#909090 0 1px,transparent 1px 2px)"></div>
<svg style="position:absolute;left:59.00px;top:205px" width="9" height="9"><path d="M1.2 4.6 L3.4 7.8 L8.3 1.2" fill="none" stroke="#22d822" stroke-width="1.7"/></svg>
<svg style="position:absolute;left:68.5px;top:202.5px" width="13" height="13"><circle cx="6.5" cy="6.5" r="5.7" fill="none" stroke="#780808" stroke-width="1.05"/><rect x="3.7" y="3.8" width="1.1" height="1.4" fill="#600"/><rect x="8.2" y="3.8" width="1.1" height="1.4" fill="#600"/><path d="M3.2 7 Q6.5 11 9.8 7" fill="none" stroke="#700808" stroke-width="0.95"/></svg>
<div class="t" style="left:84.5px;top:206.23px;font-size:8px;line-height:8px">Le travail domestique</div>
<div class="t" style="left:202.3px;width:20px;text-align:right;top:206.23px;font-size:8px;line-height:8px">2</div>
<div style="position:absolute;left:48px;top:221px;width:10px;height:1px;background:repeating-linear-gradient(to right,#909090 0 1px,transparent 1px 2px)"></div>
<svg style="position:absolute;left:59.00px;top:217px" width="9" height="9"><path d="M1.2 4.6 L3.4 7.8 L8.3 1.2" fill="none" stroke="#22d822" stroke-width="1.7"/></svg>
<svg style="position:absolute;left:68.5px;top:214.5px" width="13" height="13"><circle cx="6.5" cy="6.5" r="5.7" fill="none" stroke="#780808" stroke-width="1.05"/><rect x="3.7" y="3.8" width="1.1" height="1.4" fill="#600"/><rect x="8.2" y="3.8" width="1.1" height="1.4" fill="#600"/><path d="M3.2 7 Q6.5 11 9.8 7" fill="none" stroke="#700808" stroke-width="0.95"/></svg>
<div class="t" style="left:84.5px;top:218.23px;font-size:8px;line-height:8px">Le sport</div>
<div class="t" style="left:202.3px;width:20px;text-align:right;top:218.23px;font-size:8px;line-height:8px">2</div>
<div style="position:absolute;left:48px;top:233px;width:10px;height:1px;background:repeating-linear-gradient(to right,#909090 0 1px,transparent 1px 2px)"></div>
<svg style="position:absolute;left:59.00px;top:229px" width="9" height="9"><path d="M1.2 4.6 L3.4 7.8 L8.3 1.2" fill="none" stroke="#22d822" stroke-width="1.7"/></svg>
<svg style="position:absolute;left:68.5px;top:226.5px" width="13" height="13"><circle cx="6.5" cy="6.5" r="5.7" fill="none" stroke="#780808" stroke-width="1.05"/><rect x="3.7" y="3.8" width="1.1" height="1.4" fill="#600"/><rect x="8.2" y="3.8" width="1.1" height="1.4" fill="#600"/><path d="M3.2 7 Q6.5 11 9.8 7" fill="none" stroke="#700808" stroke-width="0.95"/></svg>
<div class="t" style="left:84.5px;top:230.23px;font-size:8px;line-height:8px">Loisirs, voyages</div>
<div class="t" style="left:202.3px;width:20px;text-align:right;top:230.23px;font-size:8px;line-height:8px">2</div>
<div style="position:absolute;left:48px;top:245px;width:10px;height:1px;background:repeating-linear-gradient(to right,#909090 0 1px,transparent 1px 2px)"></div>
<svg style="position:absolute;left:59.00px;top:241px" width="9" height="9"><path d="M1.2 4.6 L3.4 7.8 L8.3 1.2" fill="none" stroke="#22d822" stroke-width="1.7"/></svg>
<svg style="position:absolute;left:68.5px;top:238.5px" width="13" height="13"><circle cx="6.5" cy="6.5" r="5.7" fill="none" stroke="#780808" stroke-width="1.05"/><rect x="3.7" y="3.8" width="1.1" height="1.4" fill="#600"/><rect x="8.2" y="3.8" width="1.1" height="1.4" fill="#600"/><path d="M3.2 7 Q6.5 11 9.8 7" fill="none" stroke="#700808" stroke-width="0.95"/></svg>
<div class="t" style="left:84.5px;top:242.23px;font-size:8px;line-height:8px">Relations sexuelles</div>
<div class="t" style="left:202.3px;width:20px;text-align:right;top:242.23px;font-size:8px;line-height:8px">2</div>
<div style="position:absolute;left:48px;top:257px;width:10px;height:1px;background:repeating-linear-gradient(to right,#909090 0 1px,transparent 1px 2px)"></div>
<svg style="position:absolute;left:59.00px;top:253px" width="9" height="9"><path d="M1.2 4.6 L3.4 7.8 L8.3 1.2" fill="none" stroke="#22d822" stroke-width="1.7"/></svg>
<svg style="position:absolute;left:68.5px;top:250.5px" width="13" height="13"><circle cx="6.5" cy="6.5" r="5.7" fill="none" stroke="#780808" stroke-width="1.05"/><rect x="3.7" y="3.8" width="1.1" height="1.4" fill="#600"/><rect x="8.2" y="3.8" width="1.1" height="1.4" fill="#600"/><path d="M3.2 7 Q6.5 11 9.8 7" fill="none" stroke="#700808" stroke-width="0.95"/></svg>
<div class="t" style="left:84.5px;top:254.23px;font-size:8px;line-height:8px">Soins de toilette</div>
<div class="t" style="left:202.3px;width:20px;text-align:right;top:254.23px;font-size:8px;line-height:8px">2</div>
<div style="position:absolute;left:48px;top:269px;width:10px;height:1px;background:repeating-linear-gradient(to right,#909090 0 1px,transparent 1px 2px)"></div>
<svg style="position:absolute;left:59.00px;top:265px" width="9" height="9"><path d="M1.2 4.6 L3.4 7.8 L8.3 1.2" fill="none" stroke="#22d822" stroke-width="1.7"/></svg>
<svg style="position:absolute;left:68.5px;top:262.5px" width="13" height="13"><circle cx="6.5" cy="6.5" r="5.7" fill="none" stroke="#780808" stroke-width="1.05"/><rect x="3.7" y="3.8" width="1.1" height="1.4" fill="#600"/><rect x="8.2" y="3.8" width="1.1" height="1.4" fill="#600"/><path d="M3.2 7 Q6.5 11 9.8 7" fill="none" stroke="#700808" stroke-width="0.95"/></svg>
<div class="t" style="left:84.5px;top:266.23px;font-size:8px;line-height:8px">Vêtements</div>
<div class="t" style="left:202.3px;width:20px;text-align:right;top:266.23px;font-size:8px;line-height:8px">1</div>
<div style="position:absolute;left:48px;top:281px;width:10px;height:1px;background:repeating-linear-gradient(to right,#909090 0 1px,transparent 1px 2px)"></div>
<svg style="position:absolute;left:59.00px;top:277px" width="9" height="9"><path d="M1.2 4.6 L3.4 7.8 L8.3 1.2" fill="none" stroke="#22d822" stroke-width="1.7"/></svg>
<svg style="position:absolute;left:68.5px;top:274.5px" width="13" height="13"><circle cx="6.5" cy="6.5" r="5.7" fill="none" stroke="#780808" stroke-width="1.05"/><rect x="3.7" y="3.8" width="1.1" height="1.4" fill="#600"/><rect x="8.2" y="3.8" width="1.1" height="1.4" fill="#600"/><path d="M3.2 7 Q6.5 11 9.8 7" fill="none" stroke="#700808" stroke-width="0.95"/></svg>
<div class="t" style="left:84.5px;top:278.23px;font-size:8px;line-height:8px">Soins dentaires</div>
<div class="t" style="left:202.3px;width:20px;text-align:right;top:278.23px;font-size:8px;line-height:8px">3</div>
<div style="position:absolute;left:31px;top:290px;width:5px;height:5px;background:#fff;border:1px solid #8c8c8c"></div><div style="position:absolute;left:33px;top:293px;width:4px;height:1px;background:#000"></div>
<div style="position:absolute;left:39px;top:293px;width:4px;height:1px;background:#b4b4b4"></div>
<svg style="position:absolute;left:44.75px;top:289px" width="9" height="9"><path d="M1.2 4.6 L3.4 7.8 L8.3 1.2" fill="none" stroke="#22d822" stroke-width="1.7"/></svg>
<svg style="position:absolute;left:54.2px;top:286.5px" width="13" height="13"><circle cx="6.5" cy="6.5" r="5.7" fill="none" stroke="#780808" stroke-width="1.05"/><rect x="3.7" y="3.8" width="1.1" height="1.4" fill="#600"/><rect x="8.2" y="3.8" width="1.1" height="1.4" fill="#600"/><path d="M3.2 7 Q6.5 11 9.8 7" fill="none" stroke="#700808" stroke-width="0.95"/></svg>
<div class="t" style="left:70.2px;top:290.23px;font-size:8px;line-height:8px">L&#x27;alimentation de la femme en...</div>
<div class="t" style="left:202.3px;width:20px;text-align:right;top:290.23px;font-size:8px;line-height:8px">3</div>
<div style="position:absolute;left:48px;top:305px;width:10px;height:1px;background:repeating-linear-gradient(to right,#909090 0 1px,transparent 1px 2px)"></div>
<svg style="position:absolute;left:59.00px;top:301px" width="9" height="9"><path d="M1.2 4.6 L3.4 7.8 L8.3 1.2" fill="none" stroke="#22d822" stroke-width="1.7"/></svg>
<svg style="position:absolute;left:68.5px;top:298.5px" width="13" height="13"><circle cx="6.5" cy="6.5" r="5.7" fill="none" stroke="#780808" stroke-width="1.05"/><rect x="3.7" y="3.8" width="1.1" height="1.4" fill="#600"/><rect x="8.2" y="3.8" width="1.1" height="1.4" fill="#600"/><path d="M3.2 7 Q6.5 11 9.8 7" fill="none" stroke="#700808" stroke-width="0.95"/></svg>
<div class="t" style="left:84.5px;top:302.23px;font-size:8px;line-height:8px">Le lait et les fromages</div>
<div class="t" style="left:202.3px;width:20px;text-align:right;top:302.23px;font-size:8px;line-height:8px">6</div>
<div style="position:absolute;left:48px;top:317px;width:10px;height:1px;background:repeating-linear-gradient(to right,#909090 0 1px,transparent 1px 2px)"></div>
<svg style="position:absolute;left:59.00px;top:313px" width="9" height="9"><path d="M1.2 4.6 L3.4 7.8 L8.3 1.2" fill="none" stroke="#22d822" stroke-width="1.7"/></svg>
<svg style="position:absolute;left:68.5px;top:310.5px" width="13" height="13"><circle cx="6.5" cy="6.5" r="5.7" fill="none" stroke="#780808" stroke-width="1.05"/><rect x="3.7" y="3.8" width="1.1" height="1.4" fill="#600"/><rect x="8.2" y="3.8" width="1.1" height="1.4" fill="#600"/><path d="M3.2 7 Q6.5 11 9.8 7" fill="none" stroke="#700808" stroke-width="0.95"/></svg>
<div class="t" style="left:84.5px;top:314.23px;font-size:8px;line-height:8px">Légumes et fruits</div>
<div class="t" style="left:202.3px;width:20px;text-align:right;top:314.23px;font-size:8px;line-height:8px">6</div>
<div style="position:absolute;left:48px;top:329px;width:10px;height:1px;background:repeating-linear-gradient(to right,#909090 0 1px,transparent 1px 2px)"></div>
<svg style="position:absolute;left:59.00px;top:325px" width="9" height="9"><path d="M1.2 4.6 L3.4 7.8 L8.3 1.2" fill="none" stroke="#22d822" stroke-width="1.7"/></svg>
<svg style="position:absolute;left:68.5px;top:322.5px" width="13" height="13"><circle cx="6.5" cy="6.5" r="5.7" fill="none" stroke="#780808" stroke-width="1.05"/><rect x="3.7" y="3.8" width="1.1" height="1.4" fill="#600"/><rect x="8.2" y="3.8" width="1.1" height="1.4" fill="#600"/><path d="M3.2 7 Q6.5 11 9.8 7" fill="none" stroke="#700808" stroke-width="0.95"/></svg>
<div class="t" style="left:84.5px;top:326.23px;font-size:8px;line-height:8px">Viandes et poissons</div>
<div class="t" style="left:202.3px;width:20px;text-align:right;top:326.23px;font-size:8px;line-height:8px">5</div>
<div style="position:absolute;left:48px;top:341px;width:10px;height:1px;background:repeating-linear-gradient(to right,#909090 0 1px,transparent 1px 2px)"></div>
<svg style="position:absolute;left:59.00px;top:337px" width="9" height="9"><path d="M1.2 4.6 L3.4 7.8 L8.3 1.2" fill="none" stroke="#22d822" stroke-width="1.7"/></svg>
<svg style="position:absolute;left:68.5px;top:334.5px" width="13" height="13"><circle cx="6.5" cy="6.5" r="5.7" fill="none" stroke="#780808" stroke-width="1.05"/><rect x="3.7" y="3.8" width="1.1" height="1.4" fill="#600"/><rect x="8.2" y="3.8" width="1.1" height="1.4" fill="#600"/><path d="M3.2 7 Q6.5 11 9.8 7" fill="none" stroke="#700808" stroke-width="0.95"/></svg>
<div class="t" style="left:84.5px;top:338.23px;font-size:8px;line-height:8px">Les matières grasses</div>
<div class="t" style="left:202.3px;width:20px;text-align:right;top:338.23px;font-size:8px;line-height:8px">3</div>
<div style="position:absolute;left:48px;top:353px;width:10px;height:1px;background:repeating-linear-gradient(to right,#909090 0 1px,transparent 1px 2px)"></div>
<svg style="position:absolute;left:59.00px;top:349px" width="9" height="9"><path d="M1.2 4.6 L3.4 7.8 L8.3 1.2" fill="none" stroke="#22d822" stroke-width="1.7"/></svg>
<svg style="position:absolute;left:68.5px;top:346.5px" width="13" height="13"><circle cx="6.5" cy="6.5" r="5.7" fill="none" stroke="#780808" stroke-width="1.05"/><rect x="3.7" y="3.8" width="1.1" height="1.4" fill="#600"/><rect x="8.2" y="3.8" width="1.1" height="1.4" fill="#600"/><path d="M3.2 7 Q6.5 11 9.8 7" fill="none" stroke="#700808" stroke-width="0.95"/></svg>
<div class="t" style="left:84.5px;top:350.23px;font-size:8px;line-height:8px">Céréales et féculents</div>
<div class="t" style="left:202.3px;width:20px;text-align:right;top:350.23px;font-size:8px;line-height:8px">4</div>
<div style="position:absolute;left:48px;top:365px;width:10px;height:1px;background:repeating-linear-gradient(to right,#909090 0 1px,transparent 1px 2px)"></div>
<svg style="position:absolute;left:59.00px;top:361px" width="9" height="9"><path d="M1.2 4.6 L3.4 7.8 L8.3 1.2" fill="none" stroke="#22d822" stroke-width="1.7"/></svg>
<svg style="position:absolute;left:68.5px;top:358.5px" width="13" height="13"><circle cx="6.5" cy="6.5" r="5.7" fill="none" stroke="#780808" stroke-width="1.05"/><rect x="3.7" y="3.8" width="1.1" height="1.4" fill="#600"/><rect x="8.2" y="3.8" width="1.1" height="1.4" fill="#600"/><path d="M3.2 7 Q6.5 11 9.8 7" fill="none" stroke="#700808" stroke-width="0.95"/></svg>
<div class="t" style="left:84.5px;top:362.23px;font-size:8px;line-height:8px">Sucres et confiseries</div>
<div class="t" style="left:202.3px;width:20px;text-align:right;top:362.23px;font-size:8px;line-height:8px">2</div>
<div style="position:absolute;left:48px;top:377px;width:10px;height:1px;background:repeating-linear-gradient(to right,#909090 0 1px,transparent 1px 2px)"></div>
<svg style="position:absolute;left:59.00px;top:373px" width="9" height="9"><path d="M1.2 4.6 L3.4 7.8 L8.3 1.2" fill="none" stroke="#22d822" stroke-width="1.7"/></svg>
<svg style="position:absolute;left:68.5px;top:370.5px" width="13" height="13"><circle cx="6.5" cy="6.5" r="5.7" fill="none" stroke="#780808" stroke-width="1.05"/><rect x="3.7" y="3.8" width="1.1" height="1.4" fill="#600"/><rect x="8.2" y="3.8" width="1.1" height="1.4" fill="#600"/><path d="M3.2 7 Q6.5 11 9.8 7" fill="none" stroke="#700808" stroke-width="0.95"/></svg>
<div class="t" style="left:84.5px;top:374.23px;font-size:8px;line-height:8px">Les boissons</div>
<div class="t" style="left:202.3px;width:20px;text-align:right;top:374.23px;font-size:8px;line-height:8px">3</div>
<div style="position:absolute;left:17px;top:386px;width:5px;height:5px;background:#fff;border:1px solid #8c8c8c"></div><div style="position:absolute;left:19px;top:389px;width:4px;height:1px;background:#000"></div>
<div style="position:absolute;left:25px;top:389px;width:4px;height:1px;background:#b4b4b4"></div>
<svg style="position:absolute;left:30.50px;top:385px" width="9" height="9"><path d="M1.2 4.6 L3.4 7.8 L8.3 1.2" fill="none" stroke="#22d822" stroke-width="1.7"/></svg>
<svg style="position:absolute;left:40.0px;top:383px" width="13" height="12"><path d="M6.5 0.5 L12.5 3.5 L6.5 6.5 L0.5 3.5 Z" fill="#98941c"/><path d="M3 2 L9 5 M5 1 L11 4" stroke="#50a028" stroke-width="0.7"/><path d="M0.5 3.5 L6.5 6.5 V11.5 L0.5 8.5 Z" fill="#b00808"/><path d="M6.5 6.5 L12.5 3.5 V8.5 L6.5 11.5 Z" fill="#080888"/></svg>
<div class="t" style="left:56.0px;top:386.23px;font-size:8px;line-height:8px">La préparation à l&#x27;accouchement</div>
<div class="t" style="left:202.3px;width:20px;text-align:right;top:386.23px;font-size:8px;line-height:8px">4</div>
<div style="position:absolute;left:31px;top:398px;width:5px;height:5px;background:#fff;border:1px solid #8c8c8c"></div><div style="position:absolute;left:33px;top:401px;width:4px;height:1px;background:#000"></div>
<div style="position:absolute;left:39px;top:401px;width:4px;height:1px;background:#b4b4b4"></div>
<svg style="position:absolute;left:44.75px;top:397px" width="9" height="9"><path d="M1.2 4.6 L3.4 7.8 L8.3 1.2" fill="none" stroke="#22d822" stroke-width="1.7"/></svg>
<svg style="position:absolute;left:54.2px;top:395px" width="13" height="12"><path d="M6.5 0.5 L12.5 3.5 L6.5 6.5 L0.5 3.5 Z" fill="#98941c"/><path d="M3 2 L9 5 M5 1 L11 4" stroke="#50a028" stroke-width="0.7"/><path d="M0.5 3.5 L6.5 6.5 V11.5 L0.5 8.5 Z" fill="#b00808"/><path d="M6.5 6.5 L12.5 3.5 V8.5 L6.5 11.5 Z" fill="#080888"/></svg>
<div class="t" style="left:70.2px;top:398.23px;font-size:8px;line-height:8px">La douleur et sa prévention</div>
<div class="t" style="left:202.3px;width:20px;text-align:right;top:398.23px;font-size:8px;line-height:8px">1</div>
<div style="position:absolute;left:48px;top:413px;width:10px;height:1px;background:repeating-linear-gradient(to right,#909090 0 1px,transparent 1px 2px)"></div>
<svg style="position:absolute;left:59.00px;top:409px" width="9" height="9"><path d="M1.2 4.6 L3.4 7.8 L8.3 1.2" fill="none" stroke="#22d822" stroke-width="1.7"/></svg>
<svg style="position:absolute;left:68.5px;top:407px" width="13" height="12"><path d="M6.5 0.5 L12.5 3.5 L6.5 6.5 L0.5 3.5 Z" fill="#98941c"/><path d="M3 2 L9 5 M5 1 L11 4" stroke="#50a028" stroke-width="0.7"/><path d="M0.5 3.5 L6.5 6.5 V11.5 L0.5 8.5 Z" fill="#b00808"/><path d="M6.5 6.5 L12.5 3.5 V8.5 L6.5 11.5 Z" fill="#080888"/></svg>
<div class="t" style="left:84.5px;top:410.23px;font-size:8px;line-height:8px">Seuil de douleur</div>
<div class="t" style="left:202.3px;width:20px;text-align:right;top:410.23px;font-size:8px;line-height:8px">3</div>
<div style="position:absolute;left:48px;top:425px;width:10px;height:1px;background:repeating-linear-gradient(to right,#909090 0 1px,transparent 1px 2px)"></div>
<svg style="position:absolute;left:59.00px;top:421px" width="9" height="9"><path d="M1.2 4.6 L3.4 7.8 L8.3 1.2" fill="none" stroke="#22d822" stroke-width="1.7"/></svg>
<svg style="position:absolute;left:68.5px;top:419px" width="13" height="12"><path d="M6.5 0.5 L12.5 3.5 L6.5 6.5 L0.5 3.5 Z" fill="#98941c"/><path d="M3 2 L9 5 M5 1 L11 4" stroke="#50a028" stroke-width="0.7"/><path d="M0.5 3.5 L6.5 6.5 V11.5 L0.5 8.5 Z" fill="#b00808"/><path d="M6.5 6.5 L12.5 3.5 V8.5 L6.5 11.5 Z" fill="#080888"/></svg>
<div class="t" style="left:84.5px;top:422.23px;font-size:8px;line-height:8px">Le seuil de tolérance</div>
<div class="t" style="left:202.3px;width:20px;text-align:right;top:422.23px;font-size:8px;line-height:8px">3</div>
<div style="position:absolute;left:48px;top:437px;width:10px;height:1px;background:repeating-linear-gradient(to right,#909090 0 1px,transparent 1px 2px)"></div>
<svg style="position:absolute;left:59.00px;top:433px" width="9" height="9"><path d="M1.2 4.6 L3.4 7.8 L8.3 1.2" fill="none" stroke="#22d822" stroke-width="1.7"/></svg>
<svg style="position:absolute;left:68.5px;top:431px" width="13" height="12"><path d="M6.5 0.5 L12.5 3.5 L6.5 6.5 L0.5 3.5 Z" fill="#98941c"/><path d="M3 2 L9 5 M5 1 L11 4" stroke="#50a028" stroke-width="0.7"/><path d="M0.5 3.5 L6.5 6.5 V11.5 L0.5 8.5 Z" fill="#b00808"/><path d="M6.5 6.5 L12.5 3.5 V8.5 L6.5 11.5 Z" fill="#080888"/></svg>
<div class="t" style="left:84.5px;top:434.23px;font-size:8px;line-height:8px">Résister à la douleur ?</div>
<div class="t" style="left:202.3px;width:20px;text-align:right;top:434.23px;font-size:8px;line-height:8px">5</div>
<div style="position:absolute;left:48px;top:449px;width:10px;height:1px;background:repeating-linear-gradient(to right,#909090 0 1px,transparent 1px 2px)"></div>
<svg style="position:absolute;left:59.00px;top:445px" width="9" height="9"><path d="M1.2 4.6 L3.4 7.8 L8.3 1.2" fill="none" stroke="#22d822" stroke-width="1.7"/></svg>
<svg style="position:absolute;left:68.5px;top:443px" width="13" height="12"><path d="M6.5 0.5 L12.5 3.5 L6.5 6.5 L0.5 3.5 Z" fill="#98941c"/><path d="M3 2 L9 5 M5 1 L11 4" stroke="#50a028" stroke-width="0.7"/><path d="M0.5 3.5 L6.5 6.5 V11.5 L0.5 8.5 Z" fill="#b00808"/><path d="M6.5 6.5 L12.5 3.5 V8.5 L6.5 11.5 Z" fill="#080888"/></svg>
<div class="t" style="left:84.5px;top:446.23px;font-size:8px;line-height:8px">Prévenir la douleur</div>
<div class="t" style="left:202.3px;width:20px;text-align:right;top:446.23px;font-size:8px;line-height:8px">4</div>
<div style="position:absolute;left:48px;top:461px;width:10px;height:1px;background:repeating-linear-gradient(to right,#909090 0 1px,transparent 1px 2px)"></div>
<svg style="position:absolute;left:59.00px;top:457px" width="9" height="9"><path d="M1.2 4.6 L3.4 7.8 L8.3 1.2" fill="none" stroke="#22d822" stroke-width="1.7"/></svg>
<svg style="position:absolute;left:68.5px;top:455px" width="13" height="12"><path d="M6.5 0.5 L12.5 3.5 L6.5 6.5 L0.5 3.5 Z" fill="#98941c"/><path d="M3 2 L9 5 M5 1 L11 4" stroke="#50a028" stroke-width="0.7"/><path d="M0.5 3.5 L6.5 6.5 V11.5 L0.5 8.5 Z" fill="#b00808"/><path d="M6.5 6.5 L12.5 3.5 V8.5 L6.5 11.5 Z" fill="#080888"/></svg>
<div class="t" style="left:84.5px;top:458.23px;font-size:8px;line-height:8px">Nature de la douleur</div>
<div class="t" style="left:202.3px;width:20px;text-align:right;top:458.23px;font-size:8px;line-height:8px">3</div>
<div style="position:absolute;left:48px;top:473px;width:10px;height:1px;background:repeating-linear-gradient(to right,#909090 0 1px,transparent 1px 2px)"></div>
<svg style="position:absolute;left:59.00px;top:469px" width="9" height="9"><path d="M1.2 4.6 L3.4 7.8 L8.3 1.2" fill="none" stroke="#22d822" stroke-width="1.7"/></svg>
<svg style="position:absolute;left:68.5px;top:467px" width="13" height="12"><path d="M6.5 0.5 L12.5 3.5 L6.5 6.5 L0.5 3.5 Z" fill="#98941c"/><path d="M3 2 L9 5 M5 1 L11 4" stroke="#50a028" stroke-width="0.7"/><path d="M0.5 3.5 L6.5 6.5 V11.5 L0.5 8.5 Z" fill="#b00808"/><path d="M6.5 6.5 L12.5 3.5 V8.5 L6.5 11.5 Z" fill="#080888"/></svg>
<div class="t" style="left:84.5px;top:470.23px;font-size:8px;line-height:8px">Contractions uterines</div>
<div class="t" style="left:202.3px;width:20px;text-align:right;top:470.23px;font-size:8px;line-height:8px">3</div>
<div style="position:absolute;left:48px;top:485px;width:10px;height:1px;background:repeating-linear-gradient(to right,#909090 0 1px,transparent 1px 2px)"></div>
<svg style="position:absolute;left:59.00px;top:481px" width="9" height="9"><path d="M1.2 4.6 L3.4 7.8 L8.3 1.2" fill="none" stroke="#22d822" stroke-width="1.7"/></svg>
<svg style="position:absolute;left:68.5px;top:479px" width="13" height="12"><path d="M6.5 0.5 L12.5 3.5 L6.5 6.5 L0.5 3.5 Z" fill="#98941c"/><path d="M3 2 L9 5 M5 1 L11 4" stroke="#50a028" stroke-width="0.7"/><path d="M0.5 3.5 L6.5 6.5 V11.5 L0.5 8.5 Z" fill="#b00808"/><path d="M6.5 6.5 L12.5 3.5 V8.5 L6.5 11.5 Z" fill="#080888"/></svg>
<div class="t" style="left:84.5px;top:482.23px;font-size:8px;line-height:8px">Comment respirer ?</div>
<div class="t" style="left:202.3px;width:20px;text-align:right;top:482.23px;font-size:8px;line-height:8px">6</div>
<div style="position:absolute;left:48px;top:497px;width:10px;height:1px;background:repeating-linear-gradient(to right,#909090 0 1px,transparent 1px 2px)"></div>
<svg style="position:absolute;left:59.00px;top:493px" width="9" height="9"><path d="M1.2 4.6 L3.4 7.8 L8.3 1.2" fill="none" stroke="#22d822" stroke-width="1.7"/></svg>
<svg style="position:absolute;left:68.5px;top:491px" width="13" height="12"><path d="M6.5 0.5 L12.5 3.5 L6.5 6.5 L0.5 3.5 Z" fill="#98941c"/><path d="M3 2 L9 5 M5 1 L11 4" stroke="#50a028" stroke-width="0.7"/><path d="M0.5 3.5 L6.5 6.5 V11.5 L0.5 8.5 Z" fill="#b00808"/><path d="M6.5 6.5 L12.5 3.5 V8.5 L6.5 11.5 Z" fill="#080888"/></svg>
<div class="t" style="left:84.5px;top:494.23px;font-size:8px;line-height:8px">Durée de la douleur</div>
<div class="t" style="left:202.3px;width:20px;text-align:right;top:494.23px;font-size:8px;line-height:8px">4</div>
<div style="position:absolute;left:48px;top:509px;width:10px;height:1px;background:repeating-linear-gradient(to right,#909090 0 1px,transparent 1px 2px)"></div>
<svg style="position:absolute;left:59.00px;top:505px" width="9" height="9"><path d="M1.2 4.6 L3.4 7.8 L8.3 1.2" fill="none" stroke="#22d822" stroke-width="1.7"/></svg>
<svg style="position:absolute;left:68.5px;top:503px" width="13" height="12"><path d="M6.5 0.5 L12.5 3.5 L6.5 6.5 L0.5 3.5 Z" fill="#98941c"/><path d="M3 2 L9 5 M5 1 L11 4" stroke="#50a028" stroke-width="0.7"/><path d="M0.5 3.5 L6.5 6.5 V11.5 L0.5 8.5 Z" fill="#b00808"/><path d="M6.5 6.5 L12.5 3.5 V8.5 L6.5 11.5 Z" fill="#080888"/></svg>
<div class="t" style="left:84.5px;top:506.23px;font-size:8px;line-height:8px">La péridurale</div>
<div class="t" style="left:202.3px;width:20px;text-align:right;top:506.23px;font-size:8px;line-height:8px">6</div>
<div style="position:absolute;left:48px;top:521px;width:10px;height:1px;background:repeating-linear-gradient(to right,#909090 0 1px,transparent 1px 2px)"></div>
<svg style="position:absolute;left:59.00px;top:517px" width="9" height="9"><path d="M1.2 4.6 L3.4 7.8 L8.3 1.2" fill="none" stroke="#22d822" stroke-width="1.7"/></svg>
<svg style="position:absolute;left:68.5px;top:515px" width="13" height="12"><path d="M6.5 0.5 L12.5 3.5 L6.5 6.5 L0.5 3.5 Z" fill="#98941c"/><path d="M3 2 L9 5 M5 1 L11 4" stroke="#50a028" stroke-width="0.7"/><path d="M0.5 3.5 L6.5 6.5 V11.5 L0.5 8.5 Z" fill="#b00808"/><path d="M6.5 6.5 L12.5 3.5 V8.5 L6.5 11.5 Z" fill="#080888"/></svg>
<div class="t" style="left:84.5px;top:518.23px;font-size:8px;line-height:8px">Qu&#x27;est-ce que la péridural...</div>
<div class="t" style="left:202.3px;width:20px;text-align:right;top:518.23px;font-size:8px;line-height:8px">3</div>
<div style="position:absolute;left:48px;top:533px;width:10px;height:1px;background:repeating-linear-gradient(to right,#909090 0 1px,transparent 1px 2px)"></div>
<svg style="position:absolute;left:59.00px;top:529px" width="9" height="9"><path d="M1.2 4.6 L3.4 7.8 L8.3 1.2" fill="none" stroke="#22d822" stroke-width="1.7"/></svg>
<svg style="position:absolute;left:68.5px;top:527px" width="13" height="12"><path d="M6.5 0.5 L12.5 3.5 L6.5 6.5 L0.5 3.5 Z" fill="#98941c"/><path d="M3 2 L9 5 M5 1 L11 4" stroke="#50a028" stroke-width="0.7"/><path d="M0.5 3.5 L6.5 6.5 V11.5 L0.5 8.5 Z" fill="#b00808"/><path d="M6.5 6.5 L12.5 3.5 V8.5 L6.5 11.5 Z" fill="#080888"/></svg>
<div class="t" style="left:84.5px;top:530.23px;font-size:8px;line-height:8px">Risque de la péridurale ?</div>
<div class="t" style="left:202.3px;width:20px;text-align:right;top:530.23px;font-size:8px;line-height:8px">1</div>
<div style="position:absolute;left:48px;top:545px;width:10px;height:1px;background:repeating-linear-gradient(to right,#909090 0 1px,transparent 1px 2px)"></div>
<svg style="position:absolute;left:59.00px;top:541px" width="9" height="9"><path d="M1.2 4.6 L3.4 7.8 L8.3 1.2" fill="none" stroke="#22d822" stroke-width="1.7"/></svg>
<svg style="position:absolute;left:68.5px;top:539px" width="13" height="12"><path d="M6.5 0.5 L12.5 3.5 L6.5 6.5 L0.5 3.5 Z" fill="#98941c"/><path d="M3 2 L9 5 M5 1 L11 4" stroke="#50a028" stroke-width="0.7"/><path d="M0.5 3.5 L6.5 6.5 V11.5 L0.5 8.5 Z" fill="#b00808"/><path d="M6.5 6.5 L12.5 3.5 V8.5 L6.5 11.5 Z" fill="#080888"/></svg>
<div class="t" style="left:84.5px;top:542.23px;font-size:8px;line-height:8px">Péridurale et précautions</div>
<div class="t" style="left:202.3px;width:20px;text-align:right;top:542.23px;font-size:8px;line-height:8px">1</div>
<div style="position:absolute;left:31px;top:554px;width:5px;height:5px;background:#fff;border:1px solid #8c8c8c"></div><div style="position:absolute;left:33px;top:557px;width:4px;height:1px;background:#000"></div>
<div style="position:absolute;left:39px;top:557px;width:4px;height:1px;background:#b4b4b4"></div>
<svg style="position:absolute;left:44.75px;top:553px" width="9" height="9"><path d="M1.2 4.6 L3.4 7.8 L8.3 1.2" fill="none" stroke="#22d822" stroke-width="1.7"/></svg>
<svg style="position:absolute;left:54.2px;top:551px" width="13" height="12"><path d="M6.5 0.5 L12.5 3.5 L6.5 6.5 L0.5 3.5 Z" fill="#98941c"/><path d="M3 2 L9 5 M5 1 L11 4" stroke="#50a028" stroke-width="0.7"/><path d="M0.5 3.5 L6.5 6.5 V11.5 L0.5 8.5 Z" fill="#b00808"/><path d="M6.5 6.5 L12.5 3.5 V8.5 L6.5 11.5 Z" fill="#080888"/></svg>
<div class="t" style="left:70.2px;top:554.23px;font-size:8px;line-height:8px">Les eaux</div>
<div class="t" style="left:202.3px;width:20px;text-align:right;top:554.23px;font-size:8px;line-height:8px">2</div>
<div style="position:absolute;left:48px;top:569px;width:10px;height:1px;background:repeating-linear-gradient(to right,#909090 0 1px,transparent 1px 2px)"></div>
<svg style="position:absolute;left:59.00px;top:565px" width="9" height="9"><path d="M1.2 4.6 L3.4 7.8 L8.3 1.2" fill="none" stroke="#22d822" stroke-width="1.7"/></svg>
<svg style="position:absolute;left:68.5px;top:563px" width="13" height="12"><path d="M6.5 0.5 L12.5 3.5 L6.5 6.5 L0.5 3.5 Z" fill="#98941c"/><path d="M3 2 L9 5 M5 1 L11 4" stroke="#50a028" stroke-width="0.7"/><path d="M0.5 3.5 L6.5 6.5 V11.5 L0.5 8.5 Z" fill="#b00808"/><path d="M6.5 6.5 L12.5 3.5 V8.5 L6.5 11.5 Z" fill="#080888"/></svg>
<div class="t" style="left:84.5px;top:566.23px;font-size:8px;line-height:8px">Perte des eaux</div>
<div class="t" style="left:202.3px;width:20px;text-align:right;top:566.23px;font-size:8px;line-height:8px">4</div>
<div style="position:absolute;left:48px;top:581px;width:10px;height:1px;background:repeating-linear-gradient(to right,#909090 0 1px,transparent 1px 2px)"></div>
<svg style="position:absolute;left:59.00px;top:577px" width="9" height="9"><path d="M1.2 4.6 L3.4 7.8 L8.3 1.2" fill="none" stroke="#22d822" stroke-width="1.7"/></svg>
<svg style="position:absolute;left:68.5px;top:575px" width="13" height="12"><path d="M6.5 0.5 L12.5 3.5 L6.5 6.5 L0.5 3.5 Z" fill="#98941c"/><path d="M3 2 L9 5 M5 1 L11 4" stroke="#50a028" stroke-width="0.7"/><path d="M0.5 3.5 L6.5 6.5 V11.5 L0.5 8.5 Z" fill="#b00808"/><path d="M6.5 6.5 L12.5 3.5 V8.5 L6.5 11.5 Z" fill="#080888"/></svg>
<div class="t" style="left:84.5px;top:578.23px;font-size:8px;line-height:8px">Travail sans rupture</div>
<div class="t" style="left:202.3px;width:20px;text-align:right;top:578.23px;font-size:8px;line-height:8px">3</div>
<div style="position:absolute;left:48px;top:593px;width:10px;height:1px;background:repeating-linear-gradient(to right,#909090 0 1px,transparent 1px 2px)"></div>
<svg style="position:absolute;left:59.00px;top:589px" width="9" height="9"><path d="M1.2 4.6 L3.4 7.8 L8.3 1.2" fill="none" stroke="#22d822" stroke-width="1.7"/></svg>
<svg style="position:absolute;left:68.5px;top:587px" width="13" height="12"><path d="M6.5 0.5 L12.5 3.5 L6.5 6.5 L0.5 3.5 Z" fill="#98941c"/><path d="M3 2 L9 5 M5 1 L11 4" stroke="#50a028" stroke-width="0.7"/><path d="M0.5 3.5 L6.5 6.5 V11.5 L0.5 8.5 Z" fill="#b00808"/><path d="M6.5 6.5 L12.5 3.5 V8.5 L6.5 11.5 Z" fill="#080888"/></svg>
<div class="t" style="left:84.5px;top:590.23px;font-size:8px;line-height:8px">Partir à la maternite</div>
<div class="t" style="left:202.3px;width:20px;text-align:right;top:590.23px;font-size:8px;line-height:8px">2</div>
<div style="position:absolute;left:48px;top:605px;width:10px;height:1px;background:repeating-linear-gradient(to right,#909090 0 1px,transparent 1px 2px)"></div>
<svg style="position:absolute;left:59.00px;top:601px" width="9" height="9"><path d="M1.2 4.6 L3.4 7.8 L8.3 1.2" fill="none" stroke="#22d822" stroke-width="1.7"/></svg>
<svg style="position:absolute;left:68.5px;top:599px" width="13" height="12"><path d="M6.5 0.5 L12.5 3.5 L6.5 6.5 L0.5 3.5 Z" fill="#98941c"/><path d="M3 2 L9 5 M5 1 L11 4" stroke="#50a028" stroke-width="0.7"/><path d="M0.5 3.5 L6.5 6.5 V11.5 L0.5 8.5 Z" fill="#b00808"/><path d="M6.5 6.5 L12.5 3.5 V8.5 L6.5 11.5 Z" fill="#080888"/></svg>
<div class="t" style="left:84.5px;top:602.23px;font-size:8px;line-height:8px">Le bouchon muqueux</div>
<div class="t" style="left:202.3px;width:20px;text-align:right;top:602.23px;font-size:8px;line-height:8px">4</div>
<div style="position:absolute;left:31px;top:614px;width:5px;height:5px;background:#fff;border:1px solid #8c8c8c"></div><div style="position:absolute;left:33px;top:617px;width:4px;height:1px;background:#000"></div>
<div style="position:absolute;left:39px;top:617px;width:4px;height:1px;background:#b4b4b4"></div>
<svg style="position:absolute;left:44.75px;top:613px" width="9" height="9"><path d="M1.2 4.6 L3.4 7.8 L8.3 1.2" fill="none" stroke="#22d822" stroke-width="1.7"/></svg>
<svg style="position:absolute;left:54.2px;top:611px" width="13" height="12"><path d="M6.5 0.5 L12.5 3.5 L6.5 6.5 L0.5 3.5 Z" fill="#98941c"/><path d="M3 2 L9 5 M5 1 L11 4" stroke="#50a028" stroke-width="0.7"/><path d="M0.5 3.5 L6.5 6.5 V11.5 L0.5 8.5 Z" fill="#b00808"/><path d="M6.5 6.5 L12.5 3.5 V8.5 L6.5 11.5 Z" fill="#080888"/></svg>
<div class="t" style="left:70.2px;top:614.23px;font-size:8px;line-height:8px">Où accoucher ?</div>
<div style="position:absolute;left:48px;top:629px;width:10px;height:1px;background:repeating-linear-gradient(to right,#909090 0 1px,transparent 1px 2px)"></div>
<svg style="position:absolute;left:59.00px;top:625px" width="9" height="9"><path d="M1.2 4.6 L3.4 7.8 L8.3 1.2" fill="none" stroke="#22d822" stroke-width="1.7"/></svg>
<svg style="position:absolute;left:68.5px;top:623px" width="13" height="12"><path d="M6.5 0.5 L12.5 3.5 L6.5 6.5 L0.5 3.5 Z" fill="#98941c"/><path d="M3 2 L9 5 M5 1 L11 4" stroke="#50a028" stroke-width="0.7"/><path d="M0.5 3.5 L6.5 6.5 V11.5 L0.5 8.5 Z" fill="#b00808"/><path d="M6.5 6.5 L12.5 3.5 V8.5 L6.5 11.5 Z" fill="#080888"/></svg>
<div class="t" style="left:84.5px;top:626.23px;font-size:8px;line-height:8px">Lieu d&#x27;accouchement</div>
<div class="t" style="left:202.3px;width:20px;text-align:right;top:626.23px;font-size:8px;line-height:8px">2</div>
<div style="position:absolute;left:48px;top:641px;width:10px;height:1px;background:repeating-linear-gradient(to right,#909090 0 1px,transparent 1px 2px)"></div>
<svg style="position:absolute;left:59.00px;top:637px" width="9" height="9"><path d="M1.2 4.6 L3.4 7.8 L8.3 1.2" fill="none" stroke="#22d822" stroke-width="1.7"/></svg>
<svg style="position:absolute;left:68.5px;top:635px" width="13" height="12"><path d="M6.5 0.5 L12.5 3.5 L6.5 6.5 L0.5 3.5 Z" fill="#98941c"/><path d="M3 2 L9 5 M5 1 L11 4" stroke="#50a028" stroke-width="0.7"/><path d="M0.5 3.5 L6.5 6.5 V11.5 L0.5 8.5 Z" fill="#b00808"/><path d="M6.5 6.5 L12.5 3.5 V8.5 L6.5 11.5 Z" fill="#080888"/></svg>
<div class="t" style="left:84.5px;top:638.23px;font-size:8px;line-height:8px">Accoucher à domicile</div>
<div style="position:absolute;left:48px;top:653px;width:10px;height:1px;background:repeating-linear-gradient(to right,#909090 0 1px,transparent 1px 2px)"></div>
<svg style="position:absolute;left:59.00px;top:649px" width="9" height="9"><path d="M1.2 4.6 L3.4 7.8 L8.3 1.2" fill="none" stroke="#22d822" stroke-width="1.7"/></svg>
<svg style="position:absolute;left:68.5px;top:647px" width="13" height="12"><path d="M6.5 0.5 L12.5 3.5 L6.5 6.5 L0.5 3.5 Z" fill="#98941c"/><path d="M3 2 L9 5 M5 1 L11 4" stroke="#50a028" stroke-width="0.7"/><path d="M0.5 3.5 L6.5 6.5 V11.5 L0.5 8.5 Z" fill="#b00808"/><path d="M6.5 6.5 L12.5 3.5 V8.5 L6.5 11.5 Z" fill="#080888"/></svg>
<div class="t" style="left:84.5px;top:650.23px;font-size:8px;line-height:8px">Accoucher à l&#x27;hopital</div>
<div class="t" style="left:202.3px;width:20px;text-align:right;top:650.23px;font-size:8px;line-height:8px">4</div>
<div style="position:absolute;left:48px;top:665px;width:10px;height:1px;background:repeating-linear-gradient(to right,#909090 0 1px,transparent 1px 2px)"></div>
<svg style="position:absolute;left:59.00px;top:661px" width="9" height="9"><path d="M1.2 4.6 L3.4 7.8 L8.3 1.2" fill="none" stroke="#22d822" stroke-width="1.7"/></svg>
<svg style="position:absolute;left:68.5px;top:659px" width="13" height="12"><path d="M6.5 0.5 L12.5 3.5 L6.5 6.5 L0.5 3.5 Z" fill="#98941c"/><path d="M3 2 L9 5 M5 1 L11 4" stroke="#50a028" stroke-width="0.7"/><path d="M0.5 3.5 L6.5 6.5 V11.5 L0.5 8.5 Z" fill="#b00808"/><path d="M6.5 6.5 L12.5 3.5 V8.5 L6.5 11.5 Z" fill="#080888"/></svg>
<div class="t" style="left:84.5px;top:662.23px;font-size:8px;line-height:8px">Accoucher en clinique</div>
<div class="t" style="left:202.3px;width:20px;text-align:right;top:662.23px;font-size:8px;line-height:8px">2</div>
<div style="position:absolute;left:31px;top:674px;width:5px;height:5px;background:#fff;border:1px solid #8c8c8c"></div><div style="position:absolute;left:33px;top:677px;width:4px;height:1px;background:#000"></div>
<div style="position:absolute;left:39px;top:677px;width:4px;height:1px;background:#b4b4b4"></div>
<svg style="position:absolute;left:44.75px;top:673px" width="9" height="9"><path d="M1.2 4.6 L3.4 7.8 L8.3 1.2" fill="none" stroke="#22d822" stroke-width="1.7"/></svg>
<svg style="position:absolute;left:54.2px;top:671px" width="13" height="12"><path d="M6.5 0.5 L12.5 3.5 L6.5 6.5 L0.5 3.5 Z" fill="#98941c"/><path d="M3 2 L9 5 M5 1 L11 4" stroke="#50a028" stroke-width="0.7"/><path d="M0.5 3.5 L6.5 6.5 V11.5 L0.5 8.5 Z" fill="#b00808"/><path d="M6.5 6.5 L12.5 3.5 V8.5 L6.5 11.5 Z" fill="#080888"/></svg>
<div class="t" style="left:70.2px;top:674.23px;font-size:8px;line-height:8px">Quand partir à la maternité ?</div>
</div>
<div style="position:absolute;left:401px;top:63px;width:12px;height:678px;background:repeating-conic-gradient(#c8c8c8 0 25%,#f4f4f4 0 50%) 0 0/2px 2px"></div>
<div style="position:absolute;left:401px;top:63px;width:12px;height:11px;background:#cccccc;box-shadow:inset -1px -1px #404040, inset 1px 1px #fff, inset -2px -2px #808080"></div>
<svg style="position:absolute;left:401px;top:63px" width="12" height="11" viewBox="0 0 12 11"><path d="M3.0 7.0 L6.0 4.0 L9.0 7.0 Z" fill="#000"/></svg>
<div style="position:absolute;left:401px;top:729px;width:12px;height:12px;background:#cccccc;box-shadow:inset -1px -1px #404040, inset 1px 1px #fff, inset -2px -2px #808080"></div>
<svg style="position:absolute;left:401px;top:729px" width="12" height="12" viewBox="0 0 12 12"><path d="M3.0 4.5 L6.0 7.5 L9.0 4.5 Z" fill="#000"/></svg>
<div style="position:absolute;left:401px;top:127px;width:12px;height:24px;background:#cccccc;box-shadow:inset -1px -1px #404040, inset 1px 1px #fff, inset -2px -2px #808080"></div>
<div style="position:absolute;left:66px;top:741px;width:347px;height:12px;background:repeating-conic-gradient(#c8c8c8 0 25%,#f4f4f4 0 50%) 0 0/2px 2px"></div>
<div style="position:absolute;left:66px;top:741px;width:12px;height:12px;background:#cccccc;box-shadow:inset -1px -1px #404040, inset 1px 1px #fff, inset -2px -2px #808080"></div>
<svg style="position:absolute;left:66px;top:741px" width="12" height="12" viewBox="0 0 12 12"><path d="M7.5 3.0 L4.5 6.0 L7.5 9.0 Z" fill="#000"/></svg>
<div style="position:absolute;left:78px;top:741px;width:12px;height:12px;background:#cccccc;box-shadow:inset -1px -1px #404040, inset 1px 1px #fff, inset -2px -2px #808080"></div>
<div style="position:absolute;left:401px;top:741px;width:12px;height:12px;background:#cccccc;box-shadow:inset -1px -1px #404040, inset 1px 1px #fff, inset -2px -2px #808080"></div>
<svg style="position:absolute;left:401px;top:741px" width="12" height="12" viewBox="0 0 12 12"><path d="M4.5 3.0 L7.5 6.0 L4.5 9.0 Z" fill="#000"/></svg>
<div style="position:absolute;left:417px;top:48px;width:541px;height:706px;background:#cccccc"></div>
<div style="position:absolute;left:417px;top:48px;width:541px;height:1px;background:#808080"></div>
<div style="position:absolute;left:417px;top:49px;width:1px;height:705px;background:#000"></div>
<div style="position:absolute;left:418px;top:49px;width:540px;height:1px;background:#404040"></div>
<div style="position:absolute;left:418px;top:50px;width:530px;height:681px;background:#fff"></div>
<svg style="position:absolute;left:437px;top:67px" width="102" height="102" viewBox="0 0 102 102"><rect width="102" height="102" fill="#f8d0d0"/><path d="M79 0 L88 0 L80 8 L72 18 L66 26 L62 33 L55 38 L45 42 L38 48 L32 56 L28 70 L20 80 L12 78 L5.8 65.3 L16.6 66.7 L26 66.7 L26.8 57 L28 51.8 L34.2 46.4 L34.9 39.6 L38.3 35 L45 33.5 L53 32 L58.6 28 L62.6 22 L69.4 12.5 L75 4.4 Z" fill="#fff2ec"/><path d="M16 66 L26 66.7 L25 76 L21 80 L14 74 Z" fill="#fff"/><path d="M36 34 L53 32 L48 39 L38 44 L34 42 Z" fill="#fff"/><ellipse cx="64" cy="40" rx="4" ry="6" transform="rotate(35 64 40)" fill="#fff6f2"/><path d="M0 0 L79 0 L75 4.4 L69.4 12.5 L62.6 22 L58.6 28 L53 32 L45 33.5 L38.3 35 L34.9 39.6 L34.2 46.4 L28 51.8 L26.8 57 L26 66.7 L16.6 66.7 L5.8 65.3 L5.8 49 L1.7 45 L0 45 Z" fill="#c8c8c8"/><path d="M99 0 L102 0 L102 102 L50.5 102 L49 99.2 L43.7 92.4 L38.3 85.7 L35.6 80 L41 74.8 L49 66.7 L55.9 57 L62.6 47.7 L70.8 37 L77.5 26 L85.7 15 L93.8 7 Z" fill="#c8c8c8"/><path d="M0 77.5 L12.5 80 L20.7 85.7 L26 93.8 L28.8 102 L0 102 Z" fill="#c8c8c8"/></svg>
<div class="t" style="left:708.80px;top:69.47px;font-size:20px;line-height:20px;color:#000;font-weight:normal;">Index</div>
<div class="t" style="left:585.30px;top:92.44px;font-size:12px;line-height:12px;color:#6a5cc0;font-weight:normal;-webkit-text-stroke:0.35px #6a5cc0">A</div>
<div class="t" style="left:599.90px;top:92.44px;font-size:12px;line-height:12px;color:#6a5cc0;font-weight:normal;-webkit-text-stroke:0.35px #6a5cc0">B</div>
<div class="t" style="left:615.00px;top:92.44px;font-size:12px;line-height:12px;color:#6a5cc0;font-weight:normal;-webkit-text-stroke:0.35px #6a5cc0">C</div>
<div class="t" style="left:629.90px;top:92.44px;font-size:12px;line-height:12px;color:#707070;font-weight:normal;-webkit-text-stroke:0.35px #707070">D</div>
<div class="t" style="left:645.10px;top:92.44px;font-size:12px;line-height:12px;color:#e00000;font-weight:normal;-webkit-text-stroke:0.35px #e00000">E</div>
<div class="t" style="left:659.30px;top:92.44px;font-size:12px;line-height:12px;color:#6a5cc0;font-weight:normal;-webkit-text-stroke:0.35px #6a5cc0">F</div>
<div class="t" style="left:672.80px;top:92.44px;font-size:12px;line-height:12px;color:#707070;font-weight:normal;-webkit-text-stroke:0.35px #707070">G</div>
<div class="t" style="left:687.40px;top:92.44px;font-size:12px;line-height:12px;color:#6a5cc0;font-weight:normal;-webkit-text-stroke:0.35px #6a5cc0">H</div>
<div class="t" style="left:703.00px;top:92.44px;font-size:12px;line-height:12px;color:#6a5cc0;font-weight:normal;-webkit-text-stroke:0.35px #6a5cc0">I</div>
<div class="t" style="left:711.10px;top:92.44px;font-size:12px;line-height:12px;color:#6a5cc0;font-weight:normal;-webkit-text-stroke:0.35px #6a5cc0">J</div>
<div class="t" style="left:724.90px;top:92.44px;font-size:12px;line-height:12px;color:#6a5cc0;font-weight:normal;-webkit-text-stroke:0.35px #6a5cc0">K</div>
<div class="t" style="left:739.50px;top:92.44px;font-size:12px;line-height:12px;color:#6a5cc0;font-weight:normal;-webkit-text-stroke:0.35px #6a5cc0">L</div>
<div class="t" style="left:753.10px;top:92.44px;font-size:12px;line-height:12px;color:#6a5cc0;font-weight:normal;-webkit-text-stroke:0.35px #6a5cc0">M</div>
<div class="t" style="left:768.60px;top:92.44px;font-size:12px;line-height:12px;color:#6a5cc0;font-weight:normal;-webkit-text-stroke:0.35px #6a5cc0">N</div>
<div class="t" style="left:783.70px;top:92.44px;font-size:12px;line-height:12px;color:#6a5cc0;font-weight:normal;-webkit-text-stroke:0.35px #6a5cc0">O</div>
<div class="t" style="left:798.90px;top:92.44px;font-size:12px;line-height:12px;color:#6a5cc0;font-weight:normal;-webkit-text-stroke:0.35px #6a5cc0">P</div>
<div class="t" style="left:813.40px;top:92.44px;font-size:12px;line-height:12px;color:#6a5cc0;font-weight:normal;-webkit-text-stroke:0.35px #6a5cc0">R</div>
<div class="t" style="left:828.10px;top:92.44px;font-size:12px;line-height:12px;color:#6a5cc0;font-weight:normal;-webkit-text-stroke:0.35px #6a5cc0">S</div>
<div class="t" style="left:841.60px;top:92.44px;font-size:12px;line-height:12px;color:#6a5cc0;font-weight:normal;-webkit-text-stroke:0.35px #6a5cc0">T</div>
<div class="t" style="left:855.60px;top:92.44px;font-size:12px;line-height:12px;color:#6a5cc0;font-weight:normal;-webkit-text-stroke:0.35px #6a5cc0">U</div>
<div class="t" style="left:870.10px;top:92.44px;font-size:12px;line-height:12px;color:#6a5cc0;font-weight:normal;-webkit-text-stroke:0.35px #6a5cc0">V</div>
<div class="t" style="left:545.30px;top:106.31px;font-size:20.6px;line-height:20.6px;color:#e00000;font-weight:bold;">E</div>
<div style="position:absolute;left:418px;top:50px;width:530px;height:681px;overflow:hidden">
<div class="t" style="left:126.6px;top:80.14px;font-size:12px;line-height:12px;font-weight:bold;color:#000">Eau oxygénée</div>
<div class="t" style="left:156.0px;top:94.13px;font-size:11.7px;line-height:11.7px;color:#988ec6">Désinfectants</div>
<div class="t" style="left:126.6px;top:107.62px;font-size:12px;line-height:12px;font-weight:bold;color:#000">Eaux</div>
<div class="t" style="left:156.0px;top:121.61px;font-size:11.7px;line-height:11.7px;color:#a4a4a4">Le bouchon muqueux</div>
<div class="t" style="left:156.0px;top:135.34px;font-size:11.7px;line-height:11.7px;color:#988ec6">Les eaux</div>
<div class="t" style="left:156.0px;top:149.08px;font-size:11.7px;line-height:11.7px;color:#a4a4a4">Perte des eaux</div>
<div class="t" style="left:156.0px;top:162.82px;font-size:11.7px;line-height:11.7px;color:#a4a4a4">Travail sans rupture</div>
<div class="t" style="left:126.6px;top:176.30px;font-size:12px;line-height:12px;font-weight:bold;color:#000">Echographie</div>
<div class="t" style="left:156.0px;top:190.29px;font-size:11.7px;line-height:11.7px;color:#988ec6">Fécondation in vitro</div>
<div class="t" style="left:156.0px;top:204.03px;font-size:11.7px;line-height:11.7px;color:#988ec6">L&#x27;examen du 9e mois</div>
<div class="t" style="left:156.0px;top:217.77px;font-size:11.7px;line-height:11.7px;color:#988ec6">L&#x27;échographie</div>
<div class="t" style="left:156.0px;top:231.50px;font-size:11.7px;line-height:11.7px;color:#988ec6">L&#x27;échographie</div>
<div class="t" style="left:156.0px;top:245.24px;font-size:11.7px;line-height:11.7px;color:#988ec6">Techniques d&#x27;examen</div>
<div class="t" style="left:126.6px;top:258.72px;font-size:12px;line-height:12px;font-weight:bold;color:#000">Echographie pelvienne</div>
<div class="t" style="left:156.0px;top:272.71px;font-size:11.7px;line-height:11.7px;color:#988ec6">Bilans complémentaires</div>
<div class="t" style="left:156.0px;top:286.45px;font-size:11.7px;line-height:11.7px;color:#988ec6">Echographie pelvienne</div>
<div class="t" style="left:156.0px;top:300.19px;font-size:11.7px;line-height:11.7px;color:#988ec6">L&#x27;examen du 9e mois</div>
<div class="t" style="left:126.6px;top:313.67px;font-size:12px;line-height:12px;font-weight:bold;color:#000">Elimination</div>
<div class="t" style="left:156.0px;top:327.66px;font-size:11.7px;line-height:11.7px;color:#988ec6">Une bonne élimination</div>
<div class="t" style="left:126.6px;top:341.14px;font-size:12px;line-height:12px;font-weight:bold;color:#000">Embryogénèse</div>
<div class="t" style="left:156.0px;top:355.14px;font-size:11.7px;line-height:11.7px;color:#a4a4a4">Etapes de développement</div>
<div class="t" style="left:156.0px;top:368.87px;font-size:11.7px;line-height:11.7px;color:#a4a4a4">Rapport sexuel</div>
<div class="t" style="left:126.6px;top:382.36px;font-size:12px;line-height:12px;font-weight:bold;color:#000">Endive</div>
<div class="t" style="left:156.0px;top:396.35px;font-size:11.7px;line-height:11.7px;color:#988ec6">Alimentation : à 1 an.</div>
<div class="t" style="left:126.6px;top:409.83px;font-size:12px;line-height:12px;font-weight:bold;color:#000">Endomètre</div>
<div class="t" style="left:156.0px;top:423.82px;font-size:11.7px;line-height:11.7px;color:#988ec6">Traitement de l&#x27;endométriose</div>
<div class="t" style="left:126.6px;top:437.30px;font-size:12px;line-height:12px;font-weight:bold;color:#000">Eosine</div>
<div class="t" style="left:156.0px;top:451.29px;font-size:11.7px;line-height:11.7px;color:#988ec6">Cicatrisants</div>
<div class="t" style="left:156.0px;top:465.03px;font-size:11.7px;line-height:11.7px;color:#988ec6">La toilette intime</div>
<div class="t" style="left:156.0px;top:478.77px;font-size:11.7px;line-height:11.7px;color:#988ec6">Produits facultatifs</div>
<div class="t" style="left:156.0px;top:492.51px;font-size:11.7px;line-height:11.7px;color:#a4a4a4">Prévention des douleurs</div>
<div class="t" style="left:156.0px;top:506.24px;font-size:11.7px;line-height:11.7px;color:#988ec6">Soins du cordon ombilical</div>
<div class="t" style="left:156.0px;top:519.98px;font-size:11.7px;line-height:11.7px;color:#988ec6">Toilette du bébé</div>
<div class="t" style="left:126.6px;top:533.46px;font-size:12px;line-height:12px;font-weight:bold;color:#000">Epinards</div>
<div class="t" style="left:156.0px;top:547.45px;font-size:11.7px;line-height:11.7px;color:#988ec6">Alimentation : à 4 mois.</div>
<div class="t" style="left:126.6px;top:560.94px;font-size:12px;line-height:12px;font-weight:bold;color:#000">Episiotomie</div>
<div class="t" style="left:156.0px;top:574.93px;font-size:11.7px;line-height:11.7px;color:#a4a4a4">Expulsion du placenta</div>
<div class="t" style="left:156.0px;top:588.66px;font-size:11.7px;line-height:11.7px;color:#988ec6">L&#x27;expulsion du bébé</div>
<div class="t" style="left:156.0px;top:602.40px;font-size:11.7px;line-height:11.7px;color:#988ec6">La toilette intime</div>
<div class="t" style="left:156.0px;top:616.14px;font-size:11.7px;line-height:11.7px;color:#988ec6">Les rapports sexuels</div>
<div class="t" style="left:156.0px;top:629.88px;font-size:11.7px;line-height:11.7px;color:#988ec6">Une matinée type : 8h</div>
<div class="t" style="left:126.6px;top:643.36px;font-size:12px;line-height:12px;font-weight:bold;color:#000">Erythème</div>
<div class="t" style="left:156.0px;top:657.35px;font-size:11.7px;line-height:11.7px;color:#988ec6">Les couches de bébé</div>
<div class="t" style="left:126.6px;top:670.83px;font-size:12px;line-height:12px;font-weight:bold;color:#000">Examen de sang</div>
</div>
<div class="t" style="left:437.50px;top:196.35px;font-size:11.7px;line-height:11.7px;color:#a0a0a0;font-weight:normal;">Avertissement</div>
<div class="t" style="left:437.50px;top:223.20px;font-size:11.7px;line-height:11.7px;color:#303030;font-weight:normal;">1.</div>
<div class="t" style="left:449.50px;top:223.20px;font-size:11.7px;line-height:11.7px;color:#a0a0a0;font-weight:normal;">La conception</div>
<div class="t" style="left:437.50px;top:236.65px;font-size:11.7px;line-height:11.7px;color:#303030;font-weight:normal;">2.</div>
<div class="t" style="left:449.50px;top:236.65px;font-size:11.7px;line-height:11.7px;color:#a0a0a0;font-weight:normal;">La grossesse</div>
<div class="t" style="left:437.50px;top:250.10px;font-size:11.7px;line-height:11.7px;color:#303030;font-weight:normal;">3.</div>
<div class="t" style="left:449.50px;top:250.10px;font-size:11.7px;line-height:11.7px;color:#a0a0a0;font-weight:normal;">La préparation</div>
<div class="t" style="left:437.50px;top:263.55px;font-size:11.7px;line-height:11.7px;color:#303030;font-weight:normal;">4.</div>
<div class="t" style="left:449.50px;top:263.55px;font-size:11.7px;line-height:11.7px;color:#a0a0a0;font-weight:normal;">L&#x27;accouchement</div>
<div class="t" style="left:437.50px;top:277.00px;font-size:11.7px;line-height:11.7px;color:#303030;font-weight:normal;">5.</div>
<div class="t" style="left:449.50px;top:277.00px;font-size:11.7px;line-height:11.7px;color:#a0a0a0;font-weight:normal;">Le nourrisson</div>
<div class="t" style="left:437.50px;top:290.45px;font-size:11.7px;line-height:11.7px;color:#303030;font-weight:normal;">6.</div>
<div class="t" style="left:449.50px;top:290.45px;font-size:11.7px;line-height:11.7px;color:#a0a0a0;font-weight:normal;">Un prénom</div>
<div class="t" style="left:437.50px;top:317.50px;font-size:11.7px;line-height:11.7px;color:#a0a0a0;font-weight:normal;">Table</div>
<div class="t" style="left:437.50px;top:330.95px;font-size:11.7px;line-height:11.7px;color:#a0a0a0;font-weight:normal;">Index</div>
<div class="t" style="left:437.50px;top:344.40px;font-size:11.7px;line-height:11.7px;color:#a0a0a0;font-weight:normal;">Images</div>
<div class="t" style="left:437.50px;top:357.85px;font-size:11.7px;line-height:11.7px;color:#a0a0a0;font-weight:normal;">Bibliographie</div>
<div style="position:absolute;left:948px;top:50px;width:10px;height:681px;background:#fff"></div>
<div style="position:absolute;left:948px;top:50px;width:10px;height:11px;background:#fff;box-shadow:inset 0 0 0 1px #8a208a"></div>
<svg style="position:absolute;left:948px;top:50px" width="10" height="11" viewBox="0 0 10 11"><path d="M2 7 L5 4 L8 7 Z" fill="#800080"/></svg>
<div style="position:absolute;left:948px;top:62px;width:10px;height:419px;background:#fff;box-shadow:inset 1px 0 #585060, inset 0 -1px #504050, inset -1px 0 #a060a8, inset 0 1px #806080"></div>
<div style="position:absolute;left:957px;top:481px;width:1px;height:239px;background:#e0c0e0"></div>
<div style="position:absolute;left:948px;top:719px;width:10px;height:11px;background:#fff;box-shadow:inset 0 0 0 1px #8a208a"></div>
<svg style="position:absolute;left:948px;top:719px" width="10" height="11" viewBox="0 0 10 11"><path d="M2 4 L5 7 L8 4 Z" fill="#800080"/></svg>
<div style="position:absolute;left:418px;top:731px;width:540px;height:2px;background:#d8d8d8"></div>
<div style="position:absolute;left:586px;top:733px;width:372px;height:1px;background:#303030"></div>
<div style="position:absolute;left:418px;top:733px;width:47px;height:16px;background:#cccccc;box-shadow:inset 0 0 0 1px #202020, inset 1px 1px #fff"></div>
<div class="t" style="left:426.30px;top:736.88px;font-size:9px;line-height:9px;color:#000;font-weight:normal;">Normal</div>
<div style="position:absolute;left:464px;top:733px;width:45px;height:16px;background:#cccccc;box-shadow:inset 0 0 0 1px #202020, inset 1px 1px #fff"></div>
<div class="t" style="left:472.50px;top:736.88px;font-size:9px;line-height:9px;color:#000;font-weight:normal;">HTML</div>
<div style="position:absolute;left:508px;top:731px;width:79px;height:18px;background:#d4d4d4;box-shadow:inset -1px 0 #303030, inset 0 -1px #303030, inset -2px 0 #909090"></div>
<div class="t" style="left:518.80px;top:736.63px;font-size:9.3px;line-height:9.3px;color:#000;font-weight:normal;">Page preview</div>
<div style="position:absolute;left:417px;top:753px;width:543px;height:1px;background:#f0f0f0"></div>
<div style="position:absolute;left:959px;top:49px;width:1px;height:719px;background:#f4f4f4"></div>
<div style="position:absolute;left:958px;top:50px;width:1px;height:681px;background:#fff"></div>
<div style="position:absolute;left:0px;top:754px;width:960px;height:1px;background:#f4f4f4"></div>
<div style="position:absolute;left:0px;top:755px;width:960px;height:13px;background:#cccccc"></div>
<div style="position:absolute;left:898px;top:756px;width:19px;height:11px;box-shadow:inset 1px 1px #808080, inset -1px -1px #fff"></div>
<div style="position:absolute;left:919px;top:756px;width:20px;height:11px;box-shadow:inset 1px 1px #808080, inset -1px -1px #fff"></div>
<div style="position:absolute;left:941px;top:756px;width:19px;height:11px;box-shadow:inset 1px 1px #808080, inset -1px -1px #fff"></div>
<div class="t" style="left:920.00px;top:758.03px;font-size:8px;line-height:8px;color:#000;font-weight:normal;">NUM</div>
<div style="position:absolute;left:0px;top:767px;width:960px;height:1px;background:#f2f2f2"></div>
</body></html>
